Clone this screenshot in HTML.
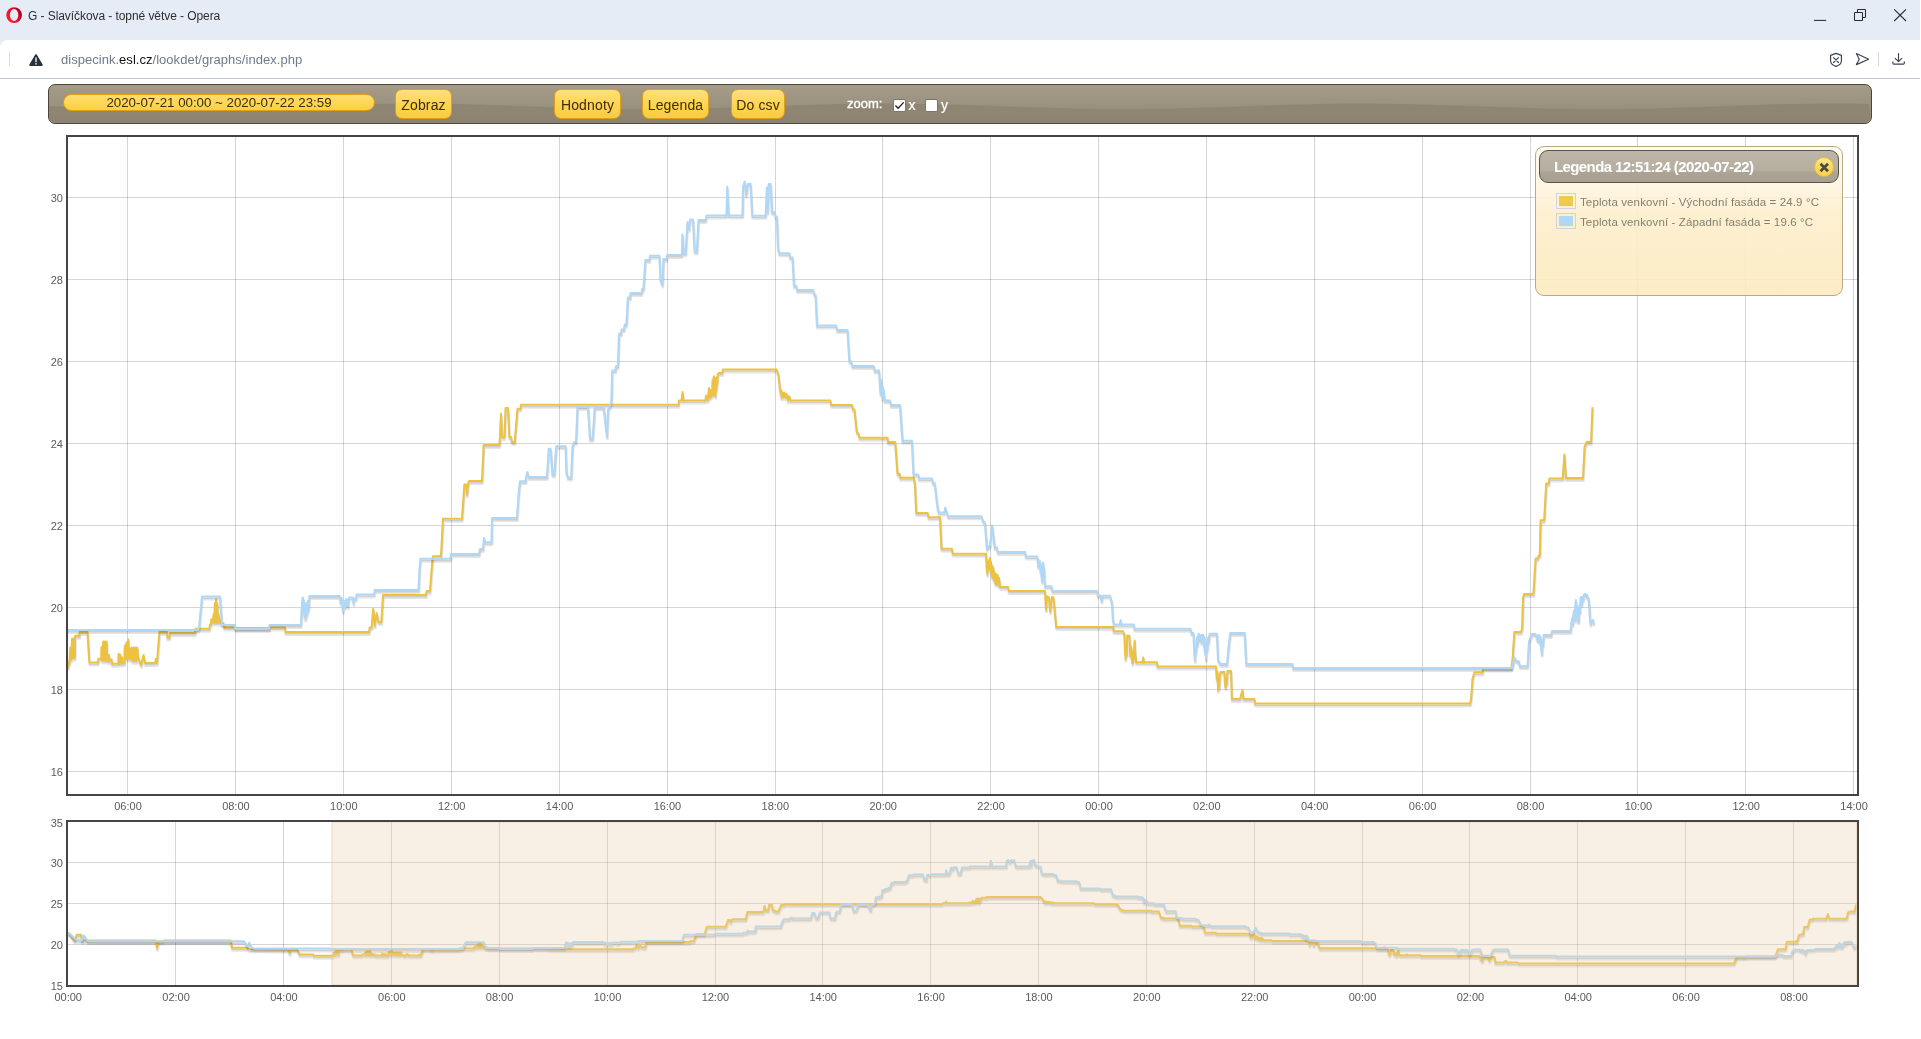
<!DOCTYPE html>
<html><head><meta charset="utf-8"><title>G - Slavíčkova - topné větve</title>
<style>
html,body{margin:0;padding:0;font-family:"Liberation Sans",sans-serif;}
body{width:1921px;height:1039px;overflow:hidden;position:relative;background:#fff;font-family:"Liberation Sans",sans-serif;}
.abs{position:absolute;}
#titlebar{left:0;top:0;width:1920px;height:50px;background:#e6ecf5;}
#title{left:28px;top:8px;font-size:12px;letter-spacing:-0.07px;color:#2e2e2e;white-space:nowrap;line-height:16px;}
#addr{left:0;top:40px;width:1920px;height:38px;background:#fff;border-top-left-radius:8px;border-bottom:1px solid #b9c6d8;}
#url{left:61px;top:52px;font-size:13px;letter-spacing:0.03px;line-height:16px;color:#6d7b8d;white-space:nowrap;}
#url b{font-weight:normal;color:#111;}
#tb{left:48px;top:84px;width:1822px;height:38px;border:1px solid #4b453b;border-radius:7px;
 background:linear-gradient(#a49b89 0%,#988f7d 65%,#968d7b 100%);overflow:hidden;}
#date{left:63px;top:94px;width:310px;height:15px;border:1px solid #e39f15;border-radius:9px;background:linear-gradient(#ffdd6d,#fdd043);
 font-size:13.300px;line-height:15px;color:#3a2c07;text-align:center;white-space:nowrap;}
.btn{top:89px;height:28px;border:1px solid #dba01c;border-radius:7px;background:linear-gradient(#ffe07a 0%,#fdd555 50%,#fccb3d 100%);
 font-size:14px;letter-spacing:0.150px;line-height:31px;color:#3d2d08;text-align:center;white-space:nowrap;}
.zl{color:#fff;white-space:nowrap;}
.cb{width:11px;height:11px;border:1px solid #767676;border-radius:2px;background:#fff;}
.tk{position:absolute;font-size:11px;line-height:13px;color:#5a5a5a;white-space:nowrap;}
#leg{left:1535px;top:146px;width:306px;height:148px;border:1px solid #b9aa83;border-radius:9px;background:linear-gradient(rgba(255,250,236,0.9) 0%,rgba(255,246,225,0.9) 25%,rgba(253,238,203,0.9) 46%,rgba(253,235,192,0.9) 100%);}
#legh{left:1539px;top:150px;width:298px;height:31px;border:1px solid #5a5347;border-radius:9px;background:linear-gradient(rgba(180,172,158,0.88) 0%,rgba(172,164,150,0.88) 62%,rgba(160,151,137,0.88) 70%,rgba(157,148,134,0.88) 100%);}
#legt{left:1554px;top:158px;font-size:15px;font-weight:bold;line-height:18px;color:#fff;white-space:nowrap;letter-spacing:-0.6px;}
#legx{left:1814px;top:157px;width:18px;height:18px;border:1px solid #e9b83a;border-radius:10px;background:linear-gradient(#ffe892 0%,#fdd85e 50%,#fdd24a 100%);}
.lb{width:14px;height:10px;border:1px solid #cfd3da;padding:2px;}
.lb i{display:block;width:14px;height:10px;}
.lt{font-size:11.500px;letter-spacing:0.120px;line-height:14px;color:#838071;white-space:nowrap;}
#root{position:absolute;left:0;top:0;width:1921px;height:1039px;will-change:transform;}
</style></head><body><div id="root">
<div id="titlebar" class="abs"></div>
<svg class="abs" style="left:5px;top:6px" width="18" height="18" viewBox="0 0 18 18"><defs><linearGradient id="og" x1="0.1" y1="0.8" x2="1" y2="0.3"><stop offset="0" stop-color="#ff1b2d"/><stop offset="0.45" stop-color="#f0102a"/><stop offset="1" stop-color="#a00019"/></linearGradient></defs><path fill-rule="evenodd" fill="url(#og)" d="M9.100 1.150a7.900 7.900 0 1 0 0 15.800a7.900 7.900 0 1 0 0-15.800ZM9.100 2.900a4.250 6.050 0 1 1 0 12.100a4.250 6.050 0 1 1 0-12.100Z"/></svg>
<div id="title" class="abs">G - Slavíčkova - topné větve - Opera</div>
<svg class="abs" style="left:1805px;top:5px" width="110" height="24" viewBox="0 0 110 24" fill="none" stroke="#2b2b2b" stroke-width="1.05">
 <path d="M8.900 15.400H21.200"/>
 <rect x="49.500" y="7.500" width="8" height="8" rx="0.600"/><path d="M52.500 7.300V5.100a0.600 0.600 0 0 1 0.600-0.600H59.900a0.600 0.600 0 0 1 0.600 0.600V11.900a0.600 0.600 0 0 1-0.600 0.600H57.700"/>
 <path d="M89.200 4.300L101 16M101 4.300L89.200 16" stroke-width="1.100"/>
</svg>
<div id="addr" class="abs"></div>
<div class="abs" style="left:9px;top:52px;width:1px;height:14px;background:#d9dde3"></div>
<svg class="abs" style="left:28px;top:52px" width="16" height="16" viewBox="0 0 16 16"><path d="M8 3.200L13.800 13H2.200Z" fill="#28313c" stroke="#28313c" stroke-width="2" stroke-linejoin="round"/><rect x="7.200" y="5.400" width="1.600" height="4.800" fill="#d8dadd"/><rect x="7.200" y="11.100" width="1.600" height="1.500" fill="#d8dadd"/></svg>
<div id="url" class="abs">dispecink.<b>esl.cz</b>/lookdet/graphs/index.php</div>
<svg class="abs" style="left:1824px;top:48px" width="90" height="24" viewBox="0 0 90 24" fill="none" stroke="#3b434d" stroke-width="1.150" stroke-linejoin="round" stroke-linecap="round">
 <path d="M12 5.400L17.400 7.400V13C17.400 15.600 14.800 17.400 12 18.400C9.200 17.400 6.600 15.600 6.600 13V7.400Z"/><path d="M9.500 9.700L14.500 14.500M14.500 9.700L9.500 14.500"/>
 <path d="M32.400 5.600L44.600 11.200L32.400 16.600L35.300 11.200Z"/>
 <path d="M54.500 4.500V17.800" stroke="#d3d7dd" stroke-width="1"/>
 <path d="M74.500 5.500V13.400M71.200 10.400L74.500 13.600L77.800 10.400M68.900 13.800V15.200Q68.900 16.100 69.800 16.100H79.400Q80.300 16.100 80.300 15.200V13.800"/>
</svg>

<div id="tb" class="abs"><svg width="1822" height="38" style="display:block"><defs><linearGradient id="wg" x1="0" y1="0" x2="0" y2="1"><stop offset="0.45" stop-color="#8e8573"/><stop offset="1" stop-color="#8a816e"/></linearGradient></defs><path d="M0,40L0,21.1 L10,21.5 L20,21.8 L30,22.2 L40,22.5 L50,22.8 L60,23.1 L70,23.3 L80,23.5 L90,23.7 L100,23.9 L110,24.0 L120,24.0 L130,24.0 L140,23.9 L150,23.8 L160,23.7 L170,23.5 L180,23.3 L190,23.0 L200,22.8 L210,22.4 L220,22.1 L230,21.8 L240,21.4 L250,21.1 L260,20.7 L270,20.4 L280,20.0 L290,19.7 L300,19.5 L310,19.2 L320,19.0 L330,18.8 L340,18.7 L350,18.6 L360,18.6 L370,18.6 L380,18.7 L390,18.8 L400,18.9 L410,19.1 L420,19.4 L430,19.6 L440,19.9 L450,20.2 L460,20.6 L470,20.9 L480,21.3 L490,21.6 L500,22.0 L510,22.3 L520,22.6 L530,22.9 L540,23.2 L550,23.4 L560,23.6 L570,23.8 L580,23.9 L590,24.0 L600,24.0 L610,24.0 L620,23.9 L630,23.8 L640,23.6 L650,23.4 L660,23.2 L670,22.9 L680,22.6 L690,22.3 L700,21.9 L710,21.6 L720,21.2 L730,20.9 L740,20.5 L750,20.2 L760,19.9 L770,19.6 L780,19.3 L790,19.1 L800,18.9 L810,18.8 L820,18.7 L830,18.6 L840,18.6 L850,18.6 L860,18.7 L870,18.9 L880,19.0 L890,19.2 L900,19.5 L910,19.8 L920,20.1 L930,20.4 L940,20.7 L950,21.1 L960,21.5 L970,21.8 L980,22.2 L990,22.5 L1000,22.8 L1010,23.1 L1020,23.3 L1030,23.5 L1040,23.7 L1050,23.9 L1060,24.0 L1070,24.0 L1080,24.0 L1090,23.9 L1100,23.8 L1110,23.7 L1120,23.5 L1130,23.3 L1140,23.0 L1150,22.8 L1160,22.4 L1170,22.1 L1180,21.8 L1190,21.4 L1200,21.1 L1210,20.7 L1220,20.4 L1230,20.0 L1240,19.7 L1250,19.5 L1260,19.2 L1270,19.0 L1280,18.8 L1290,18.7 L1300,18.6 L1310,18.6 L1320,18.6 L1330,18.7 L1340,18.8 L1350,18.9 L1360,19.1 L1370,19.4 L1380,19.6 L1390,19.9 L1400,20.2 L1410,20.6 L1420,20.9 L1430,21.3 L1440,21.6 L1450,22.0 L1460,22.3 L1470,22.6 L1480,22.9 L1490,23.2 L1500,23.4 L1510,23.6 L1520,23.8 L1530,23.9 L1540,24.0 L1550,24.0 L1560,24.0 L1570,23.9 L1580,23.8 L1590,23.6 L1600,23.4 L1610,23.2 L1620,22.9 L1630,22.6 L1640,22.3 L1650,21.9 L1660,21.6 L1670,21.2 L1680,20.9 L1690,20.5 L1700,20.2 L1710,19.9 L1720,19.6 L1730,19.3 L1740,19.1 L1750,18.9 L1760,18.8 L1770,18.7 L1780,18.6 L1790,18.6 L1800,18.6 L1810,18.7 L1820,18.9 L1822,40Z" fill="url(#wg)"/></svg></div>
<div id="date" class="abs">2020-07-21 00:00 ~ 2020-07-22 23:59</div>
<div class="btn abs" style="left:395px;width:55px">Zobraz</div>
<div class="btn abs" style="left:554px;width:65px">Hodnoty</div>
<div class="btn abs" style="left:642px;width:65px">Legenda</div>
<div class="btn abs" style="left:731px;width:52px">Do csv</div>
<div class="zl abs" style="left:847px;top:96px;font-size:13px;line-height:16px;-webkit-text-stroke:0.350px #fff">zoom:</div>
<div class="cb abs" style="left:893px;top:99px"></div>
<svg class="abs" style="left:893px;top:99px" width="13" height="13" viewBox="0 0 13 13"><path d="M2.400 6.500L5.100 9.200L10.700 3.400" fill="none" stroke="#222" stroke-width="1.350"/></svg>
<div class="zl abs" style="left:908.500px;top:97px;font-size:14px;line-height:16px;-webkit-text-stroke:0.200px #fff">x</div>
<div class="cb abs" style="left:925px;top:99px"></div>
<div class="zl abs" style="left:941px;top:97px;font-size:14px;line-height:16px;-webkit-text-stroke:0.200px #fff">y</div>

<svg width="1921" height="1039" style="position:absolute;left:0;top:0" shape-rendering="auto">
<g shape-rendering="crispEdges" stroke="rgba(0,0,0,0.165)" stroke-width="1">
<line x1="127.5" y1="137" x2="127.5" y2="794"/>
<line x1="235.5" y1="137" x2="235.5" y2="794"/>
<line x1="343.5" y1="137" x2="343.5" y2="794"/>
<line x1="451.5" y1="137" x2="451.5" y2="794"/>
<line x1="559.5" y1="137" x2="559.5" y2="794"/>
<line x1="667.5" y1="137" x2="667.5" y2="794"/>
<line x1="775.5" y1="137" x2="775.5" y2="794"/>
<line x1="882.5" y1="137" x2="882.5" y2="794"/>
<line x1="990.5" y1="137" x2="990.5" y2="794"/>
<line x1="1098.5" y1="137" x2="1098.5" y2="794"/>
<line x1="1206.5" y1="137" x2="1206.5" y2="794"/>
<line x1="1314.5" y1="137" x2="1314.5" y2="794"/>
<line x1="1422.5" y1="137" x2="1422.5" y2="794"/>
<line x1="1530.5" y1="137" x2="1530.5" y2="794"/>
<line x1="1637.5" y1="137" x2="1637.5" y2="794"/>
<line x1="1745.5" y1="137" x2="1745.5" y2="794"/>
<line x1="1853.5" y1="137" x2="1853.5" y2="794"/>
<line x1="68" y1="771.5" x2="1857" y2="771.5"/>
<line x1="68" y1="689.5" x2="1857" y2="689.5"/>
<line x1="68" y1="607.5" x2="1857" y2="607.5"/>
<line x1="68" y1="525.5" x2="1857" y2="525.5"/>
<line x1="68" y1="443.5" x2="1857" y2="443.5"/>
<line x1="68" y1="361.5" x2="1857" y2="361.5"/>
<line x1="68" y1="279.5" x2="1857" y2="279.5"/>
<line x1="68" y1="197.5" x2="1857" y2="197.5"/>
</g>
<clipPath id="cm"><rect x="68" y="137" width="1789" height="657"/></clipPath>
<g clip-path="url(#cm)">
<polyline points="-195.4,551.5 -193.4,557.5 -188.8,590.2 -186.6,561.1 -182.3,561.1 -181.5,590.2 -107.3,590.7 -106.3,627.0 -104.8,595.3 -100.3,595.3 -99.3,590.7 -32.7,590.7 -31.3,627.0 -16.7,627.0 -13.8,634.3 24.8,635.0 26.3,652.6 27.7,636.0 33.7,636.0 36.5,660.2 49.7,660.2 50.5,667.2 67.7,667.2 68.5,669.4 68.9,664.3 69.8,666.2 70.7,649.9 71.6,661.9 72.5,641.0 73.4,660.7 74.3,641.0 75.2,660.2 75.5,638.5 76.4,638.0 79.8,638.5 80.0,634.5 87.9,634.5 89.8,665.0 98.4,665.0 98.8,661.2 101.6,661.2 101.9,649.4 102.8,663.1 103.6,644.0 104.5,663.1 105.3,644.0 106.2,663.1 107.0,644.0 107.4,657.2 108.3,663.7 109.2,657.2 110.1,663.7 110.4,661.9 112.1,661.9 112.3,666.2 118.7,666.2 119.0,656.2 119.9,666.2 120.8,657.2 121.7,666.2 122.6,659.9 122.9,665.5 124.8,665.5 125.2,648.1 126.1,661.2 126.9,644.9 127.8,661.2 128.6,641.6 129.5,661.2 130.3,651.0 131.0,661.2 132.0,650.0 133.0,663.5 133.9,650.0 134.9,663.5 135.8,650.0 136.8,663.5 137.7,650.0 138.4,660.0 141.6,667.5 143.9,657.5 145.4,665.5 155.4,665.5 156.4,661.2 157.4,665.5 159.8,634.5 167.4,634.5 167.9,640.0 169.8,640.0 170.4,635.5 195.4,635.5 195.9,631.2 209.8,631.2 210.4,626.9 211.4,626.9 211.7,621.8 212.3,625.0 212.9,621.8 213.5,625.0 214.1,616.0 214.7,625.0 215.3,605.5 215.9,625.0 216.5,602.0 217.1,625.0 217.7,605.9 218.3,625.0 218.9,616.5 219.5,625.0 220.1,621.8 220.9,625.0 224.1,626.2 224.8,630.0 234.8,630.0 235.4,630.5 270.4,630.5 270.9,630.0 285.4,630.0 285.9,634.5 369.4,634.5 370.1,630.0 372.0,630.0 373.6,611.2 375.1,628.1 377.0,615.5 378.9,624.5 381.8,624.5 383.4,597.5 426.4,597.5 427.1,593.5 430.4,593.5 432.8,562.5 433.4,558.7 441.4,558.7 443.4,521.2 462.4,521.2 463.4,507.5 464.8,486.9 466.4,486.9 467.4,496.9 468.4,486.9 469.4,483.5 482.4,483.5 484.1,447.5 499.8,447.5 500.4,439.5 501.4,416.2 502.4,439.5 504.8,439.5 506.0,410.5 508.4,410.5 509.8,439.5 511.4,439.5 512.4,444.5 515.1,444.5 517.9,411.2 521.0,411.2 521.4,407.2 678.9,407.2 679.4,403.1 682.0,403.1 682.9,394.5 683.9,403.1 705.8,403.1 706.4,398.1 707.4,401.5 708.4,402.5 709.0,394.5 709.4,390.5 710.0,399.5 710.8,400.0 711.4,392.5 712.0,398.5 712.6,394.5 713.0,382.5 713.5,397.5 714.0,379.5 714.4,378.7 714.9,396.5 715.4,382.5 715.8,398.5 716.3,380.5 716.7,392.5 717.0,380.0 717.6,386.5 718.2,376.5 718.9,375.5 722.6,375.5 723.4,371.9 777.0,371.9 778.9,377.5 779.8,386.5 780.8,395.0 781.4,392.5 782.0,400.0 782.6,394.5 783.4,395.5 784.0,399.5 784.6,395.0 785.1,395.5 785.8,399.5 786.4,399.5 787.0,396.5 787.6,399.5 788.4,403.1 789.0,398.5 789.6,401.5 790.1,399.5 790.8,403.1 830.8,403.1 831.6,407.5 852.3,407.5 853.4,411.9 854.8,411.9 857.3,435.0 859.1,436.2 859.8,440.2 887.9,440.2 888.5,444.5 895.6,444.5 897.9,476.2 900.1,476.2 900.6,480.2 914.1,480.2 915.4,486.5 916.6,515.6 928.1,515.6 928.9,519.7 940.4,519.7 941.9,551.2 952.3,551.2 953.1,556.2 986.4,556.2 987.0,568.5 987.6,576.2 988.2,564.5 988.8,572.5 989.4,562.5 989.9,568.5 990.4,560.6 990.9,572.5 991.4,564.5 991.9,577.5 992.3,578.7 992.8,568.5 993.3,580.5 993.8,570.5 994.3,582.5 994.8,574.5 995.4,584.5 996.0,586.2 996.6,576.5 997.2,586.5 998.1,577.5 998.7,587.5 999.4,580.5 1000.4,589.4 1008.5,589.4 1009.1,593.5 1045.4,593.5 1046.4,611.9 1047.3,598.7 1049.4,600.0 1050.6,613.7 1052.3,599.4 1053.9,600.0 1056.6,629.4 1113.5,629.4 1114.1,633.7 1123.5,633.7 1124.8,637.5 1125.4,652.5 1126.0,661.2 1126.6,647.5 1127.1,657.5 1127.6,638.1 1128.4,638.5 1129.8,638.1 1130.3,650.5 1130.8,658.7 1131.3,648.5 1131.9,652.5 1132.4,660.5 1132.9,665.6 1133.4,654.5 1134.0,662.5 1134.6,650.5 1135.1,643.1 1135.7,657.5 1136.6,664.8 1142.9,664.8 1143.7,660.0 1144.4,664.8 1157.3,664.8 1157.9,669.0 1216.4,669.0 1217.0,678.5 1217.4,682.5 1217.9,674.5 1218.5,692.5 1219.0,680.5 1219.5,690.5 1220.1,678.5 1221.0,674.4 1224.8,674.4 1225.3,684.5 1226.0,690.0 1226.6,680.5 1227.2,686.5 1227.9,673.5 1231.4,673.5 1232.3,701.6 1240.4,701.6 1241.4,697.5 1242.9,692.5 1243.9,701.6 1254.8,701.6 1255.4,706.0 1470.6,706.0 1471.6,700.0 1472.9,681.2 1474.8,675.0 1482.9,675.0 1483.5,671.0 1511.6,671.0 1512.9,662.5 1514.8,634.4 1521.6,634.4 1522.6,630.0 1523.5,600.0 1524.4,596.5 1533.9,596.5 1536.0,561.1 1538.0,561.1 1539.0,558.1 1540.2,558.1 1541.0,522.7 1544.6,522.7 1546.6,486.0 1549.1,486.0 1549.7,481.0 1563.2,481.0 1564.8,457.1 1566.3,480.5 1583.4,480.5 1585.0,449.0 1587.1,444.4 1591.5,444.4 1592.9,409.6" fill="none" stroke="rgba(0,0,0,0.1)" stroke-width="3.00" stroke-linejoin="round"/>
<polyline points="-195.5,550.8 -193.5,556.8 -188.9,589.5 -186.7,560.3 -182.4,560.3 -181.6,589.5 -107.5,590.0 -106.5,626.2 -105.0,594.5 -100.5,594.5 -99.5,590.0 -32.9,590.0 -31.5,626.2 -16.9,626.2 -14.0,633.5 24.6,634.3 26.1,651.9 27.5,635.3 33.5,635.3 36.3,659.4 49.5,659.4 50.3,666.5 67.6,666.5 68.4,668.6 68.8,663.5 69.7,665.5 70.6,649.1 71.5,661.2 72.4,640.2 73.3,660.0 74.2,640.2 75.1,659.4 75.4,637.7 76.3,637.2 79.7,637.7 79.9,633.7 87.8,633.7 89.7,664.2 98.3,664.2 98.7,660.4 101.5,660.4 101.8,648.6 102.7,662.3 103.5,643.2 104.4,662.3 105.2,643.2 106.1,662.3 106.9,643.2 107.3,656.4 108.2,662.9 109.1,656.4 110.0,662.9 110.3,661.1 112.0,661.1 112.2,665.4 118.6,665.4 118.9,655.4 119.8,665.4 120.7,656.5 121.6,665.4 122.5,659.2 122.8,664.7 124.7,664.7 125.1,647.3 126.0,660.4 126.8,644.1 127.7,660.4 128.5,640.9 129.4,660.4 130.2,650.2 130.9,660.4 131.9,649.2 132.9,662.7 133.8,649.2 134.8,662.7 135.7,649.2 136.7,662.7 137.6,649.2 138.3,659.2 141.5,666.7 143.8,656.7 145.3,664.7 155.3,664.7 156.3,660.4 157.3,664.7 159.7,633.7 167.3,633.7 167.8,639.2 169.7,639.2 170.3,634.7 195.3,634.7 195.8,630.4 209.7,630.4 210.3,626.1 211.3,626.1 211.6,621.0 212.2,624.2 212.8,621.0 213.4,624.2 214.0,615.2 214.6,624.2 215.2,604.7 215.8,624.2 216.4,601.2 217.0,624.2 217.6,605.1 218.2,624.2 218.8,615.7 219.4,624.2 220.0,621.0 220.8,624.2 224.0,625.4 224.7,629.2 234.7,629.2 235.3,629.7 270.3,629.7 270.8,629.2 285.3,629.2 285.8,633.7 369.3,633.7 370.0,629.2 371.9,629.2 373.5,610.4 375.0,627.3 376.9,614.7 378.8,623.7 381.7,623.7 383.3,596.7 426.3,596.7 427.0,592.7 430.3,592.7 432.7,561.7 433.3,557.9 441.3,557.9 443.3,520.4 462.3,520.4 463.3,506.7 464.7,486.1 466.3,486.1 467.3,496.1 468.3,486.1 469.3,482.7 482.3,482.7 484.0,446.7 499.7,446.7 500.3,438.7 501.3,415.4 502.3,438.7 504.7,438.7 505.9,409.7 508.3,409.7 509.7,438.7 511.3,438.7 512.3,443.7 515.0,443.7 517.8,410.4 520.9,410.4 521.3,406.4 678.8,406.4 679.3,402.3 681.9,402.3 682.8,393.7 683.8,402.3 705.7,402.3 706.3,397.3 707.3,400.7 708.3,401.7 708.9,393.7 709.3,389.7 709.9,398.7 710.7,399.2 711.3,391.7 711.9,397.7 712.5,393.7 712.9,381.7 713.4,396.7 713.9,378.7 714.3,377.9 714.8,395.7 715.3,381.7 715.7,397.7 716.2,379.7 716.6,391.7 716.9,379.2 717.5,385.7 718.1,375.7 718.8,374.7 722.5,374.7 723.3,371.1 776.9,371.1 778.8,376.7 779.7,385.7 780.7,394.2 781.3,391.7 781.9,399.2 782.5,393.7 783.3,394.7 783.9,398.7 784.5,394.2 785.0,394.7 785.7,398.7 786.3,398.7 786.9,395.7 787.5,398.7 788.3,402.3 788.9,397.7 789.5,400.7 790.0,398.7 790.7,402.3 830.7,402.3 831.5,406.7 852.2,406.7 853.3,411.1 854.7,411.1 857.2,434.2 859.0,435.4 859.7,439.4 887.8,439.4 888.4,443.7 895.5,443.7 897.8,475.4 900.0,475.4 900.5,479.4 914.0,479.4 915.3,485.7 916.5,514.8 928.0,514.8 928.8,518.9 940.3,518.9 941.8,550.4 952.2,550.4 953.0,555.4 986.3,555.4 986.9,567.7 987.5,575.4 988.1,563.7 988.7,571.7 989.3,561.7 989.8,567.7 990.3,559.8 990.8,571.7 991.3,563.7 991.8,576.7 992.2,577.9 992.7,567.7 993.2,579.7 993.7,569.7 994.2,581.7 994.7,573.7 995.3,583.7 995.9,585.4 996.5,575.7 997.1,585.7 998.0,576.7 998.6,586.7 999.3,579.7 1000.3,588.6 1008.4,588.6 1009.0,592.7 1045.3,592.7 1046.3,611.1 1047.2,597.9 1049.3,599.2 1050.5,612.9 1052.2,598.6 1053.8,599.2 1056.5,628.6 1113.4,628.6 1114.0,632.9 1123.4,632.9 1124.7,636.7 1125.3,651.7 1125.9,660.4 1126.5,646.7 1127.0,656.7 1127.5,637.3 1128.3,637.7 1129.7,637.3 1130.2,649.7 1130.7,657.9 1131.2,647.7 1131.8,651.7 1132.3,659.7 1132.8,664.8 1133.3,653.7 1133.9,661.7 1134.5,649.7 1135.0,642.3 1135.6,656.7 1136.5,664.0 1142.8,664.0 1143.6,659.2 1144.3,664.0 1157.2,664.0 1157.8,668.2 1216.3,668.2 1216.9,677.7 1217.3,681.7 1217.8,673.7 1218.4,691.7 1218.9,679.7 1219.4,689.7 1220.0,677.7 1220.9,673.6 1224.7,673.6 1225.2,683.7 1225.9,689.2 1226.5,679.7 1227.1,685.7 1227.8,672.7 1231.3,672.7 1232.2,700.8 1240.3,700.8 1241.3,696.7 1242.8,691.7 1243.8,700.8 1254.7,700.8 1255.3,705.2 1470.5,705.2 1471.5,699.2 1472.8,680.4 1474.7,674.2 1482.8,674.2 1483.4,670.2 1511.5,670.2 1512.8,661.7 1514.7,633.6 1521.5,633.6 1522.5,629.2 1523.4,599.2 1524.3,595.7 1533.8,595.7 1535.9,560.3 1537.9,560.3 1538.9,557.3 1540.1,557.3 1540.9,521.9 1544.5,521.9 1546.5,485.2 1549.0,485.2 1549.6,480.2 1563.1,480.2 1564.7,456.3 1566.2,479.7 1583.3,479.7 1584.9,448.2 1587.0,443.6 1591.4,443.6 1592.8,408.8" fill="none" stroke="rgba(0,0,0,0.1)" stroke-width="1.50" stroke-linejoin="round"/>
<polyline points="-195.8,549.0 -193.8,555.1 -189.2,587.8 -187.0,558.6 -182.7,558.6 -181.9,587.8 -107.8,588.3 -106.8,624.5 -105.3,592.8 -100.8,592.8 -99.8,588.3 -33.2,588.3 -31.8,624.5 -17.2,624.5 -14.3,631.8 24.3,632.6 25.8,650.2 27.2,633.6 33.2,633.6 36.0,657.7 49.2,657.7 50.0,664.7 67.2,664.7 68.1,666.9 68.5,661.8 69.4,663.8 70.3,647.4 71.2,659.5 72.1,638.5 73.0,658.2 73.9,638.5 74.8,657.7 75.1,636.0 76.0,635.5 79.4,636.0 79.6,632.0 87.5,632.0 89.4,662.5 98.0,662.5 98.4,658.7 101.2,658.7 101.5,646.9 102.3,660.6 103.2,641.5 104.0,660.6 104.9,641.5 105.8,660.6 106.6,641.5 107.0,654.7 107.9,661.2 108.8,654.7 109.7,661.2 110.0,659.4 111.7,659.4 111.9,663.7 118.3,663.7 118.6,653.7 119.5,663.7 120.4,654.8 121.3,663.7 122.2,657.5 122.5,663.0 124.4,663.0 124.8,645.6 125.7,658.7 126.5,642.4 127.3,658.7 128.2,639.2 129.0,658.7 129.9,648.5 130.6,658.7 131.6,647.5 132.5,661.0 133.5,647.5 134.4,661.0 135.4,647.5 136.3,661.0 137.3,647.5 138.0,657.5 141.2,665.0 143.5,655.0 145.0,663.0 155.0,663.0 156.0,658.7 157.0,663.0 159.4,632.0 167.0,632.0 167.5,637.5 169.4,637.5 170.0,633.0 195.0,633.0 195.5,628.7 209.4,628.7 210.0,624.4 211.0,624.4 211.3,619.3 211.9,622.5 212.5,619.3 213.1,622.5 213.7,613.5 214.3,622.5 214.9,603.0 215.5,622.5 216.1,599.5 216.7,622.5 217.3,603.4 217.9,622.5 218.5,614.0 219.1,622.5 219.7,619.3 220.5,622.5 223.7,623.7 224.4,627.5 234.4,627.5 235.0,628.0 270.0,628.0 270.5,627.5 285.0,627.5 285.5,632.0 369.0,632.0 369.7,627.5 371.6,627.5 373.2,608.7 374.7,625.6 376.6,613.0 378.5,622.0 381.4,622.0 383.0,595.0 426.0,595.0 426.7,591.0 430.0,591.0 432.4,560.0 433.0,556.2 441.0,556.2 443.0,518.7 462.0,518.7 463.0,505.0 464.4,484.4 466.0,484.4 467.0,494.4 468.0,484.4 469.0,481.0 482.0,481.0 483.7,445.0 499.4,445.0 500.0,437.0 501.0,413.7 502.0,437.0 504.4,437.0 505.6,408.0 508.0,408.0 509.4,437.0 511.0,437.0 512.0,442.0 514.7,442.0 517.5,408.7 520.6,408.7 521.0,404.7 678.5,404.7 679.0,400.6 681.6,400.6 682.5,392.0 683.5,400.6 705.4,400.6 706.0,395.6 707.0,399.0 708.0,400.0 708.6,392.0 709.0,388.0 709.6,397.0 710.4,397.5 711.0,390.0 711.6,396.0 712.2,392.0 712.6,380.0 713.1,395.0 713.6,377.0 714.0,376.2 714.5,394.0 715.0,380.0 715.4,396.0 715.9,378.0 716.3,390.0 716.6,377.5 717.2,384.0 717.8,374.0 718.5,373.0 722.2,373.0 723.0,369.4 776.6,369.4 778.5,375.0 779.4,384.0 780.4,392.5 781.0,390.0 781.6,397.5 782.2,392.0 783.0,393.0 783.6,397.0 784.2,392.5 784.7,393.0 785.4,397.0 786.0,397.0 786.6,394.0 787.2,397.0 788.0,400.6 788.6,396.0 789.2,399.0 789.7,397.0 790.4,400.6 830.4,400.6 831.2,405.0 851.9,405.0 853.0,409.4 854.4,409.4 856.9,432.5 858.7,433.7 859.4,437.7 887.5,437.7 888.1,442.0 895.2,442.0 897.5,473.7 899.7,473.7 900.2,477.7 913.7,477.7 915.0,484.0 916.2,513.1 927.7,513.1 928.5,517.2 940.0,517.2 941.5,548.7 951.9,548.7 952.7,553.7 986.0,553.7 986.6,566.0 987.2,573.7 987.8,562.0 988.4,570.0 989.0,560.0 989.5,566.0 990.0,558.1 990.5,570.0 991.0,562.0 991.5,575.0 991.9,576.2 992.4,566.0 992.9,578.0 993.4,568.0 993.9,580.0 994.4,572.0 995.0,582.0 995.6,583.7 996.2,574.0 996.8,584.0 997.7,575.0 998.3,585.0 999.0,578.0 1000.0,586.9 1008.1,586.9 1008.7,591.0 1045.0,591.0 1046.0,609.4 1046.9,596.2 1049.0,597.5 1050.2,611.2 1051.9,596.9 1053.5,597.5 1056.2,626.9 1113.1,626.9 1113.7,631.2 1123.1,631.2 1124.4,635.0 1125.0,650.0 1125.6,658.7 1126.2,645.0 1126.7,655.0 1127.2,635.6 1128.0,636.0 1129.4,635.6 1129.9,648.0 1130.4,656.2 1130.9,646.0 1131.5,650.0 1132.0,658.0 1132.5,663.1 1133.0,652.0 1133.6,660.0 1134.2,648.0 1134.7,640.6 1135.3,655.0 1136.2,662.3 1142.5,662.3 1143.3,657.5 1144.0,662.3 1156.9,662.3 1157.5,666.5 1216.0,666.5 1216.6,676.0 1217.0,680.0 1217.5,672.0 1218.1,690.0 1218.6,678.0 1219.1,688.0 1219.7,676.0 1220.6,671.9 1224.4,671.9 1224.9,682.0 1225.6,687.5 1226.2,678.0 1226.8,684.0 1227.5,671.0 1231.0,671.0 1231.9,699.1 1240.0,699.1 1241.0,695.0 1242.5,690.0 1243.5,699.1 1254.4,699.1 1255.0,703.5 1470.2,703.5 1471.2,697.5 1472.5,678.7 1474.4,672.5 1482.5,672.5 1483.1,668.5 1511.2,668.5 1512.5,660.0 1514.4,631.9 1521.2,631.9 1522.2,627.5 1523.1,597.5 1524.0,594.0 1533.5,594.0 1535.6,558.6 1537.6,558.6 1538.6,555.6 1539.8,555.6 1540.6,520.2 1544.2,520.2 1546.2,483.5 1548.7,483.5 1549.3,478.5 1562.8,478.5 1564.4,454.6 1565.9,478.0 1583.0,478.0 1584.6,446.5 1586.7,441.9 1591.1,441.9 1592.5,407.1" fill="none" stroke="#edc240" stroke-width="2.00" stroke-linejoin="round"/>
<polyline points="-195.4,553.5 -193.4,557.5 -187.4,586.7 -181.4,590.2 -179.8,564.6 -178.4,572.6 -175.7,592.8 -163.4,593.8 -19.6,593.8 -18.3,600.3 -16.0,619.4 -14.1,601.3 -11.6,627.0 -9.3,630.0 67.7,631.0 68.4,632.5 198.4,632.5 199.4,630.5 202.4,599.0 220.4,599.0 222.4,627.5 235.4,627.5 235.9,631.5 269.4,631.5 269.9,627.5 300.4,627.5 301.4,627.5 302.0,614.5 302.7,602.5 303.4,600.0 303.8,614.5 304.3,603.5 304.8,618.5 305.3,605.5 305.8,621.2 306.3,606.5 306.8,618.5 307.3,605.5 307.8,615.5 308.3,603.5 308.8,612.5 309.9,598.5 340.1,598.5 340.9,604.5 341.4,605.5 341.9,600.5 342.4,602.5 343.0,610.5 343.6,613.5 344.2,604.5 344.9,603.5 345.4,609.5 345.9,608.5 346.4,602.5 346.9,601.5 347.6,607.5 348.4,608.5 348.9,602.5 349.4,600.0 353.4,600.0 353.9,605.5 354.4,601.2 356.4,601.2 357.0,596.9 374.4,596.9 375.1,592.5 418.9,592.5 419.9,572.5 420.8,561.2 450.8,561.2 451.4,556.5 479.4,556.5 480.4,551.5 483.4,551.5 484.4,540.5 485.8,544.7 492.0,544.7 492.4,520.5 517.4,520.5 518.9,497.5 520.4,483.7 526.0,483.7 526.4,479.5 527.9,474.5 529.1,479.5 547.4,479.5 549.1,451.2 551.0,451.2 552.9,476.9 554.8,476.9 556.6,448.7 566.0,448.7 566.9,475.0 568.4,480.0 571.6,480.0 572.9,448.7 574.8,444.5 576.4,444.5 577.9,409.5 588.4,409.5 590.4,441.2 593.1,441.2 595.1,410.0 604.1,410.0 607.4,438.7 608.4,412.5 611.0,406.9 611.9,402.5 612.6,373.1 615.8,373.1 616.4,368.7 618.3,368.7 619.4,336.2 621.4,336.2 622.0,331.9 624.4,331.9 625.1,326.9 626.8,326.9 628.3,300.0 630.4,300.0 631.0,295.5 642.0,295.5 642.7,291.3 643.9,291.3 644.4,282.5 645.8,262.5 649.8,262.5 650.4,258.2 659.8,258.2 661.0,283.2 662.9,287.0 663.9,261.4 666.9,261.4 667.6,257.5 682.3,257.5 682.9,237.0 683.9,255.7 686.0,255.7 686.6,245.7 687.9,224.5 689.4,231.5 690.4,222.0 693.4,222.0 695.1,253.9 697.3,253.9 698.9,222.5 706.0,222.5 706.9,218.0 726.9,218.0 727.6,189.2 729.1,218.0 742.9,218.0 743.4,189.5 745.0,183.9 746.6,197.0 748.1,186.4 751.0,186.4 752.6,218.2 766.0,218.2 767.3,190.1 768.1,214.5 769.1,186.4 771.0,186.4 772.3,214.5 774.8,214.5 776.0,218.9 777.3,218.9 778.4,250.7 779.8,255.7 789.8,255.7 790.6,260.1 792.9,260.1 794.4,288.2 796.6,288.2 797.6,292.5 813.4,292.5 815.4,297.5 816.0,297.5 817.4,328.1 836.6,328.1 837.6,332.5 847.9,332.5 849.8,363.7 851.6,363.7 852.6,368.5 874.1,368.5 875.1,373.1 879.4,373.1 881.0,396.2 881.6,382.5 882.9,401.2 883.5,390.0 885.1,403.1 890.4,403.1 891.4,407.5 900.4,407.5 902.9,443.3 912.3,443.3 913.9,476.9 918.5,476.9 919.4,481.0 932.3,481.0 933.5,485.6 935.1,485.6 938.1,510.6 939.1,515.0 944.8,515.0 945.6,510.0 947.3,515.0 948.5,518.7 981.9,518.7 983.5,523.7 985.4,525.0 987.3,551.2 988.9,549.5 990.4,547.5 992.6,528.1 995.1,550.0 997.3,550.0 998.1,554.4 1025.4,554.4 1026.3,559.0 1037.6,559.0 1038.0,562.5 1038.5,568.7 1039.0,562.5 1039.6,566.5 1040.4,563.7 1041.0,574.5 1041.6,567.5 1042.1,580.5 1042.6,583.7 1043.1,570.5 1043.5,565.0 1044.0,578.5 1044.5,570.5 1045.0,584.5 1045.4,588.7 1051.9,588.7 1052.6,593.4 1097.3,593.4 1098.5,598.1 1101.0,598.1 1101.9,603.1 1103.1,598.3 1110.4,598.3 1112.3,605.0 1113.5,623.7 1114.8,626.9 1120.2,626.9 1121.0,622.5 1121.8,626.9 1134.1,626.9 1135.0,631.3 1191.0,631.3 1191.9,635.6 1193.9,635.6 1194.4,647.5 1194.9,657.5 1195.4,662.5 1195.9,650.5 1196.4,654.5 1197.3,640.0 1197.8,647.5 1198.3,638.5 1199.1,636.2 1199.7,642.5 1200.4,637.5 1201.0,638.7 1201.6,644.5 1202.2,637.5 1202.8,643.5 1203.5,636.9 1204.1,647.5 1204.7,639.5 1205.3,654.5 1205.8,644.5 1206.4,661.2 1207.0,647.5 1207.6,652.5 1208.5,640.0 1209.1,644.5 1209.7,637.5 1210.4,636.2 1217.3,636.2 1218.5,662.5 1221.0,666.5 1227.3,666.5 1227.9,661.2 1228.9,650.0 1230.6,635.6 1245.1,635.6 1246.6,666.5 1292.9,666.5 1293.5,670.6 1512.3,670.6 1514.8,660.0 1517.3,663.7 1519.1,663.7 1520.4,668.7 1527.9,668.7 1529.4,643.7 1532.3,636.5 1536.0,636.5 1536.9,639.5 1537.9,642.5 1538.6,637.5 1539.2,643.5 1539.8,637.5 1540.4,645.5 1541.0,639.5 1541.6,650.5 1542.3,656.2 1542.9,644.5 1543.4,647.5 1544.1,637.5 1551.6,637.5 1552.3,633.5 1571.0,633.5 1571.9,624.5 1572.9,620.0 1573.4,626.5 1574.0,614.5 1574.8,612.5 1575.3,622.5 1575.8,606.5 1576.3,602.5 1576.8,620.5 1577.4,608.5 1578.0,623.5 1578.6,610.5 1579.1,623.7 1579.7,608.5 1580.4,614.5 1581.0,600.5 1581.6,599.4 1582.2,606.5 1582.8,599.5 1583.4,602.5 1584.2,597.5 1585.4,596.2 1586.4,598.5 1587.4,597.0 1588.4,600.5 1589.1,601.2 1589.8,610.5 1590.4,620.5 1591.0,626.2 1592.2,623.5 1593.5,622.5 1594.1,626.2" fill="none" stroke="rgba(0,0,0,0.1)" stroke-width="3.00" stroke-linejoin="round"/>
<polyline points="-195.5,552.8 -193.5,556.8 -187.5,586.0 -181.5,589.5 -179.9,563.8 -178.5,571.9 -175.8,592.0 -163.5,593.0 -19.8,593.0 -18.5,599.6 -16.2,618.7 -14.3,600.6 -11.8,626.2 -9.5,629.2 67.6,630.3 68.3,631.7 198.3,631.7 199.3,629.7 202.3,598.2 220.3,598.2 222.3,626.7 235.3,626.7 235.8,630.7 269.3,630.7 269.8,626.7 300.3,626.7 301.3,626.7 301.9,613.7 302.6,601.7 303.3,599.2 303.7,613.7 304.2,602.7 304.7,617.7 305.2,604.7 305.7,620.4 306.2,605.7 306.7,617.7 307.2,604.7 307.7,614.7 308.2,602.7 308.7,611.7 309.8,597.7 340.0,597.7 340.8,603.7 341.3,604.7 341.8,599.7 342.3,601.7 342.9,609.7 343.5,612.7 344.1,603.7 344.8,602.7 345.3,608.7 345.8,607.7 346.3,601.7 346.8,600.7 347.5,606.7 348.3,607.7 348.8,601.7 349.3,599.2 353.3,599.2 353.8,604.7 354.3,600.4 356.3,600.4 356.9,596.1 374.3,596.1 375.0,591.7 418.8,591.7 419.8,571.7 420.7,560.4 450.7,560.4 451.3,555.7 479.3,555.7 480.3,550.7 483.3,550.7 484.3,539.7 485.7,543.9 491.9,543.9 492.3,519.7 517.3,519.7 518.8,496.7 520.3,482.9 525.9,482.9 526.3,478.7 527.8,473.7 529.0,478.7 547.3,478.7 549.0,450.4 550.9,450.4 552.8,476.1 554.7,476.1 556.5,447.9 565.9,447.9 566.8,474.2 568.3,479.2 571.5,479.2 572.8,447.9 574.7,443.7 576.3,443.7 577.8,408.7 588.3,408.7 590.3,440.4 593.0,440.4 595.0,409.2 604.0,409.2 607.3,437.9 608.3,411.7 610.9,406.1 611.8,401.7 612.5,372.3 615.7,372.3 616.3,367.9 618.2,367.9 619.3,335.4 621.3,335.4 621.9,331.1 624.3,331.1 625.0,326.1 626.7,326.1 628.2,299.2 630.3,299.2 630.9,294.7 641.9,294.7 642.6,290.5 643.8,290.5 644.3,281.7 645.7,261.7 649.7,261.7 650.3,257.4 659.7,257.4 660.9,282.4 662.8,286.2 663.8,260.6 666.8,260.6 667.5,256.7 682.2,256.7 682.8,236.2 683.8,254.9 685.9,254.9 686.5,244.9 687.8,223.7 689.3,230.7 690.3,221.2 693.3,221.2 695.0,253.1 697.2,253.1 698.8,221.7 705.9,221.7 706.8,217.2 726.8,217.2 727.5,188.4 729.0,217.2 742.8,217.2 743.3,188.7 744.9,183.1 746.5,196.2 748.0,185.6 750.9,185.6 752.5,217.4 765.9,217.4 767.2,189.3 768.0,213.7 769.0,185.6 770.9,185.6 772.2,213.7 774.7,213.7 775.9,218.1 777.2,218.1 778.3,249.9 779.7,254.9 789.7,254.9 790.5,259.3 792.8,259.3 794.3,287.4 796.5,287.4 797.5,291.7 813.3,291.7 815.3,296.7 815.9,296.7 817.3,327.3 836.5,327.3 837.5,331.7 847.8,331.7 849.7,362.9 851.5,362.9 852.5,367.7 874.0,367.7 875.0,372.3 879.3,372.3 880.9,395.4 881.5,381.7 882.8,400.4 883.4,389.2 885.0,402.3 890.3,402.3 891.3,406.7 900.3,406.7 902.8,442.5 912.2,442.5 913.8,476.1 918.4,476.1 919.3,480.2 932.2,480.2 933.4,484.8 935.0,484.8 938.0,509.8 939.0,514.2 944.7,514.2 945.5,509.2 947.2,514.2 948.4,517.9 981.8,517.9 983.4,522.9 985.3,524.2 987.2,550.4 988.8,548.7 990.3,546.7 992.5,527.3 995.0,549.2 997.2,549.2 998.0,553.6 1025.3,553.6 1026.2,558.2 1037.5,558.2 1037.9,561.7 1038.4,567.9 1038.9,561.7 1039.5,565.7 1040.3,562.9 1040.9,573.7 1041.5,566.7 1042.0,579.7 1042.5,582.9 1043.0,569.7 1043.4,564.2 1043.9,577.7 1044.4,569.7 1044.9,583.7 1045.3,587.9 1051.8,587.9 1052.5,592.6 1097.2,592.6 1098.4,597.3 1100.9,597.3 1101.8,602.3 1103.0,597.5 1110.3,597.5 1112.2,604.2 1113.4,622.9 1114.7,626.1 1120.1,626.1 1120.9,621.7 1121.7,626.1 1134.0,626.1 1134.9,630.5 1190.9,630.5 1191.8,634.8 1193.8,634.8 1194.3,646.7 1194.8,656.7 1195.3,661.7 1195.8,649.7 1196.3,653.7 1197.2,639.2 1197.7,646.7 1198.2,637.7 1199.0,635.4 1199.6,641.7 1200.3,636.7 1200.9,637.9 1201.5,643.7 1202.1,636.7 1202.7,642.7 1203.4,636.1 1204.0,646.7 1204.6,638.7 1205.2,653.7 1205.7,643.7 1206.3,660.4 1206.9,646.7 1207.5,651.7 1208.4,639.2 1209.0,643.7 1209.6,636.7 1210.3,635.4 1217.2,635.4 1218.4,661.7 1220.9,665.7 1227.2,665.7 1227.8,660.4 1228.8,649.2 1230.5,634.8 1245.0,634.8 1246.5,665.7 1292.8,665.7 1293.4,669.8 1512.2,669.8 1514.7,659.2 1517.2,662.9 1519.0,662.9 1520.3,667.9 1527.8,667.9 1529.3,642.9 1532.2,635.7 1535.9,635.7 1536.8,638.7 1537.8,641.7 1538.5,636.7 1539.1,642.7 1539.7,636.7 1540.3,644.7 1540.9,638.7 1541.5,649.7 1542.2,655.4 1542.8,643.7 1543.3,646.7 1544.0,636.7 1551.5,636.7 1552.2,632.7 1570.9,632.7 1571.8,623.7 1572.8,619.2 1573.3,625.7 1573.9,613.7 1574.7,611.7 1575.2,621.7 1575.7,605.7 1576.2,601.7 1576.7,619.7 1577.3,607.7 1577.9,622.7 1578.5,609.7 1579.0,622.9 1579.6,607.7 1580.3,613.7 1580.9,599.7 1581.5,598.6 1582.1,605.7 1582.7,598.7 1583.3,601.7 1584.1,596.7 1585.3,595.4 1586.3,597.7 1587.3,596.2 1588.3,599.7 1589.0,600.4 1589.7,609.7 1590.3,619.7 1590.9,625.4 1592.1,622.7 1593.4,621.7 1594.0,625.4" fill="none" stroke="rgba(0,0,0,0.1)" stroke-width="1.50" stroke-linejoin="round"/>
<polyline points="-195.8,551.1 -193.8,555.1 -187.8,584.3 -181.8,587.8 -180.2,562.1 -178.8,570.2 -176.1,590.3 -163.8,591.3 -20.1,591.3 -18.8,597.8 -16.5,617.0 -14.6,598.8 -12.1,624.5 -9.8,627.5 67.2,628.5 68.0,630.0 198.0,630.0 199.0,628.0 202.0,596.5 220.0,596.5 222.0,625.0 235.0,625.0 235.5,629.0 269.0,629.0 269.5,625.0 300.0,625.0 301.0,625.0 301.6,612.0 302.3,600.0 303.0,597.5 303.4,612.0 303.9,601.0 304.4,616.0 304.9,603.0 305.4,618.7 305.9,604.0 306.4,616.0 306.9,603.0 307.4,613.0 307.9,601.0 308.4,610.0 309.5,596.0 339.7,596.0 340.5,602.0 341.0,603.0 341.5,598.0 342.0,600.0 342.6,608.0 343.2,611.0 343.8,602.0 344.5,601.0 345.0,607.0 345.5,606.0 346.0,600.0 346.5,599.0 347.2,605.0 348.0,606.0 348.5,600.0 349.0,597.5 353.0,597.5 353.5,603.0 354.0,598.7 356.0,598.7 356.6,594.4 374.0,594.4 374.7,590.0 418.5,590.0 419.5,570.0 420.4,558.7 450.4,558.7 451.0,554.0 479.0,554.0 480.0,549.0 483.0,549.0 484.0,538.0 485.4,542.2 491.6,542.2 492.0,518.0 517.0,518.0 518.5,495.0 520.0,481.2 525.6,481.2 526.0,477.0 527.5,472.0 528.7,477.0 547.0,477.0 548.7,448.7 550.6,448.7 552.5,474.4 554.4,474.4 556.2,446.2 565.6,446.2 566.5,472.5 568.0,477.5 571.2,477.5 572.5,446.2 574.4,442.0 576.0,442.0 577.5,407.0 588.0,407.0 590.0,438.7 592.7,438.7 594.7,407.5 603.7,407.5 607.0,436.2 608.0,410.0 610.6,404.4 611.5,400.0 612.2,370.6 615.4,370.6 616.0,366.2 617.9,366.2 619.0,333.7 621.0,333.7 621.6,329.4 624.0,329.4 624.7,324.4 626.4,324.4 627.9,297.5 630.0,297.5 630.6,293.0 641.6,293.0 642.3,288.8 643.5,288.8 644.0,280.0 645.4,260.0 649.4,260.0 650.0,255.7 659.4,255.7 660.6,280.7 662.5,284.5 663.5,258.9 666.5,258.9 667.2,255.0 681.9,255.0 682.5,234.5 683.5,253.2 685.6,253.2 686.2,243.2 687.5,222.0 689.0,229.0 690.0,219.5 693.0,219.5 694.7,251.4 696.9,251.4 698.5,220.0 705.6,220.0 706.5,215.5 726.5,215.5 727.2,186.7 728.7,215.5 742.5,215.5 743.0,187.0 744.6,181.4 746.2,194.5 747.7,183.9 750.6,183.9 752.2,215.7 765.6,215.7 766.9,187.6 767.7,212.0 768.7,183.9 770.6,183.9 771.9,212.0 774.4,212.0 775.6,216.4 776.9,216.4 778.0,248.2 779.4,253.2 789.4,253.2 790.2,257.6 792.5,257.6 794.0,285.7 796.2,285.7 797.2,290.0 813.0,290.0 815.0,295.0 815.6,295.0 817.0,325.6 836.2,325.6 837.2,330.0 847.5,330.0 849.4,361.2 851.2,361.2 852.2,366.0 873.7,366.0 874.7,370.6 879.0,370.6 880.6,393.7 881.2,380.0 882.5,398.7 883.1,387.5 884.7,400.6 890.0,400.6 891.0,405.0 900.0,405.0 902.5,440.8 911.9,440.8 913.5,474.4 918.1,474.4 919.0,478.5 931.9,478.5 933.1,483.1 934.7,483.1 937.7,508.1 938.7,512.5 944.4,512.5 945.2,507.5 946.9,512.5 948.1,516.2 981.5,516.2 983.1,521.2 985.0,522.5 986.9,548.7 988.5,547.0 990.0,545.0 992.2,525.6 994.7,547.5 996.9,547.5 997.7,551.9 1025.0,551.9 1025.9,556.5 1037.2,556.5 1037.6,560.0 1038.1,566.2 1038.6,560.0 1039.2,564.0 1040.0,561.2 1040.6,572.0 1041.2,565.0 1041.7,578.0 1042.2,581.2 1042.7,568.0 1043.1,562.5 1043.6,576.0 1044.1,568.0 1044.6,582.0 1045.0,586.2 1051.5,586.2 1052.2,590.9 1096.9,590.9 1098.1,595.6 1100.6,595.6 1101.5,600.6 1102.7,595.8 1110.0,595.8 1111.9,602.5 1113.1,621.2 1114.4,624.4 1119.8,624.4 1120.6,620.0 1121.4,624.4 1133.7,624.4 1134.6,628.8 1190.6,628.8 1191.5,633.1 1193.5,633.1 1194.0,645.0 1194.5,655.0 1195.0,660.0 1195.5,648.0 1196.0,652.0 1196.9,637.5 1197.4,645.0 1197.9,636.0 1198.7,633.7 1199.3,640.0 1200.0,635.0 1200.6,636.2 1201.2,642.0 1201.8,635.0 1202.4,641.0 1203.1,634.4 1203.7,645.0 1204.3,637.0 1204.9,652.0 1205.4,642.0 1206.0,658.7 1206.6,645.0 1207.2,650.0 1208.1,637.5 1208.7,642.0 1209.3,635.0 1210.0,633.7 1216.9,633.7 1218.1,660.0 1220.6,664.0 1226.9,664.0 1227.5,658.7 1228.5,647.5 1230.2,633.1 1244.7,633.1 1246.2,664.0 1292.5,664.0 1293.1,668.1 1511.9,668.1 1514.4,657.5 1516.9,661.2 1518.7,661.2 1520.0,666.2 1527.5,666.2 1529.0,641.2 1531.9,634.0 1535.6,634.0 1536.5,637.0 1537.5,640.0 1538.2,635.0 1538.8,641.0 1539.4,635.0 1540.0,643.0 1540.6,637.0 1541.2,648.0 1541.9,653.7 1542.5,642.0 1543.0,645.0 1543.7,635.0 1551.2,635.0 1551.9,631.0 1570.6,631.0 1571.5,622.0 1572.5,617.5 1573.0,624.0 1573.6,612.0 1574.4,610.0 1574.9,620.0 1575.4,604.0 1575.9,600.0 1576.4,618.0 1577.0,606.0 1577.6,621.0 1578.2,608.0 1578.7,621.2 1579.3,606.0 1580.0,612.0 1580.6,598.0 1581.2,596.9 1581.8,604.0 1582.4,597.0 1583.0,600.0 1583.8,595.0 1585.0,593.7 1586.0,596.0 1587.0,594.5 1588.0,598.0 1588.7,598.7 1589.4,608.0 1590.0,618.0 1590.6,623.7 1591.8,621.0 1593.1,620.0 1593.7,623.7" fill="none" stroke="#afd8f8" stroke-width="2.00" stroke-linejoin="round"/>
</g>
<rect x="67" y="136" width="1791" height="659" fill="none" stroke="#454545" stroke-width="2" shape-rendering="crispEdges"/>
<g shape-rendering="crispEdges" stroke="rgba(0,0,0,0.165)" stroke-width="1">
<line x1="175.5" y1="822" x2="175.5" y2="985"/>
<line x1="283.5" y1="822" x2="283.5" y2="985"/>
<line x1="391.5" y1="822" x2="391.5" y2="985"/>
<line x1="499.5" y1="822" x2="499.5" y2="985"/>
<line x1="607.5" y1="822" x2="607.5" y2="985"/>
<line x1="715.5" y1="822" x2="715.5" y2="985"/>
<line x1="822.5" y1="822" x2="822.5" y2="985"/>
<line x1="930.5" y1="822" x2="930.5" y2="985"/>
<line x1="1038.5" y1="822" x2="1038.5" y2="985"/>
<line x1="1146.5" y1="822" x2="1146.5" y2="985"/>
<line x1="1254.5" y1="822" x2="1254.5" y2="985"/>
<line x1="1362.5" y1="822" x2="1362.5" y2="985"/>
<line x1="1469.5" y1="822" x2="1469.5" y2="985"/>
<line x1="1577.5" y1="822" x2="1577.5" y2="985"/>
<line x1="1685.5" y1="822" x2="1685.5" y2="985"/>
<line x1="1793.5" y1="822" x2="1793.5" y2="985"/>
<line x1="68" y1="944.5" x2="1857" y2="944.5"/>
<line x1="68" y1="903.5" x2="1857" y2="903.5"/>
<line x1="68" y1="862.5" x2="1857" y2="862.5"/>
</g>
<clipPath id="co"><rect x="68" y="822" width="1789" height="163"/></clipPath>
<g clip-path="url(#co)">
<polyline points="68.4,935.3 70.4,936.5 75.0,943.0 77.2,937.2 81.5,937.2 82.3,943.0 156.4,943.1 157.4,950.3 158.9,944.0 163.4,944.0 164.4,943.1 231.0,943.1 232.4,950.3 247.0,950.3 249.9,951.7 288.5,951.9 290.0,955.4 291.4,952.1 297.4,952.1 300.2,956.9 313.4,956.9 314.2,958.3 331.4,958.3 332.3,958.7 332.7,957.7 333.6,958.1 334.5,954.8 335.4,957.2 336.3,953.0 337.2,957.0 338.1,953.0 339.0,956.9 339.3,952.5 340.2,952.4 343.6,952.5 343.8,951.8 351.7,951.8 353.6,957.8 362.2,957.8 362.6,957.1 365.4,957.1 365.7,954.7 366.5,957.4 367.4,953.6 368.2,957.4 369.1,953.6 369.9,957.4 370.8,953.6 371.2,956.3 372.1,957.6 373.0,956.3 373.9,957.6 374.2,957.2 375.9,957.2 376.1,958.1 382.5,958.1 382.8,956.1 383.7,958.1 384.6,956.3 385.5,958.1 386.4,956.8 386.7,957.9 388.6,957.9 389.0,954.5 389.8,957.1 390.7,953.8 391.5,957.1 392.4,953.2 393.2,957.1 394.1,955.0 394.8,957.1 395.8,954.8 396.7,957.5 397.7,954.8 398.6,957.5 399.6,954.8 400.5,957.5 401.5,954.8 402.2,956.8 405.4,958.3 407.7,956.3 409.2,957.9 419.2,957.9 420.2,957.1 421.2,957.9 423.6,951.8 431.2,951.8 431.7,952.8 433.6,952.8 434.2,952.0 459.2,952.0 459.7,951.1 473.6,951.1 474.2,950.2 475.2,950.2 475.5,949.2 476.1,949.9 476.7,949.2 477.3,949.9 477.9,948.1 478.5,949.9 479.1,946.0 479.7,949.9 480.3,945.3 480.9,949.9 481.5,946.1 482.1,949.9 482.7,948.2 483.3,949.9 483.9,949.2 484.7,949.9 487.9,950.1 488.6,950.9 498.6,950.9 499.2,951.0 534.1,951.0 534.6,950.9 549.1,950.9 549.6,951.8 633.1,951.8 633.8,950.9 635.7,950.9 637.3,947.1 638.8,950.5 640.7,948.0 642.6,949.8 645.5,949.8 647.1,944.4 690.1,944.4 690.8,943.6 694.1,943.6 696.5,937.4 697.1,936.7 705.1,936.7 707.1,929.2 726.1,929.2 727.1,926.5 728.5,922.4 730.1,922.4 731.1,924.4 732.1,922.4 733.1,921.7 746.1,921.7 747.8,914.6 763.5,914.6 764.1,913.0 765.1,908.4 766.1,913.0 768.5,913.0 769.7,907.2 772.1,907.2 773.5,913.0 775.1,913.0 776.1,914.0 778.8,914.0 781.6,907.4 784.7,907.4 785.1,906.6 942.6,906.6 943.1,905.8 945.7,905.8 946.6,904.0 947.6,905.8 969.5,905.8 970.1,904.8 971.1,905.4 972.1,905.6 972.7,904.0 973.1,903.2 973.7,905.0 974.5,905.1 975.1,903.6 975.7,904.8 976.3,904.0 976.7,901.7 977.2,904.6 977.7,901.1 978.1,900.9 978.6,904.4 979.1,901.7 979.5,904.8 980.0,901.3 980.4,903.6 980.7,901.2 981.3,902.5 981.9,900.5 982.6,900.3 986.3,900.3 987.1,899.6 1040.7,899.6 1042.6,900.7 1043.5,902.5 1044.5,904.1 1045.1,903.6 1045.7,905.1 1046.3,904.0 1047.1,904.2 1047.7,905.0 1048.3,904.1 1048.8,904.2 1049.5,905.0 1050.1,905.0 1050.7,904.4 1051.3,905.0 1052.1,905.8 1052.7,904.8 1053.3,905.4 1053.8,905.0 1054.5,905.8 1094.4,905.8 1095.2,906.6 1115.9,906.6 1117.0,907.5 1118.4,907.5 1120.9,912.1 1122.7,912.3 1123.4,913.1 1151.5,913.1 1152.1,914.0 1159.2,914.0 1161.5,920.3 1163.7,920.3 1164.2,921.1 1177.7,921.1 1179.0,922.3 1180.2,928.1 1191.7,928.1 1192.5,928.9 1204.0,928.9 1205.5,935.2 1215.9,935.2 1216.7,936.2 1250.0,936.2 1250.6,938.6 1251.2,940.2 1251.8,937.8 1252.4,939.4 1253.0,937.4 1253.5,938.6 1254.0,937.1 1254.5,939.4 1255.0,937.8 1255.5,940.4 1255.9,940.7 1256.4,938.6 1256.9,941.0 1257.4,939.0 1257.9,941.4 1258.4,939.8 1259.0,941.8 1259.6,942.2 1260.2,940.2 1260.8,942.2 1261.7,940.4 1262.3,942.4 1263.0,941.0 1264.0,942.8 1272.1,942.8 1272.7,943.6 1309.0,943.6 1310.0,947.3 1310.9,944.6 1313.0,944.9 1314.2,947.6 1315.9,944.8 1317.5,944.9 1320.2,950.7 1377.1,950.7 1377.7,951.6 1387.1,951.6 1388.4,952.3 1389.0,955.3 1389.6,957.1 1390.2,954.3 1390.7,956.3 1391.2,952.5 1392.0,952.5 1393.4,952.5 1393.9,954.9 1394.4,956.6 1394.9,954.5 1395.5,955.3 1396.0,956.9 1396.5,957.9 1397.0,955.7 1397.6,957.3 1398.2,954.9 1398.7,953.5 1399.3,956.3 1400.2,957.8 1406.5,957.8 1407.3,956.8 1408.0,957.8 1420.9,957.8 1421.5,958.6 1480.0,958.6 1480.6,960.5 1481.0,961.3 1481.5,959.7 1482.1,963.3 1482.6,960.9 1483.1,962.9 1483.7,960.5 1484.6,959.7 1488.4,959.7 1488.9,961.7 1489.6,962.8 1490.2,960.9 1490.8,962.1 1491.5,959.5 1495.0,959.5 1495.9,965.1 1504.0,965.1 1505.0,964.3 1506.5,963.3 1507.5,965.1 1518.4,965.1 1519.0,966.0 1734.1,966.0 1735.1,964.8 1736.4,961.0 1738.3,959.8 1746.4,959.8 1747.0,959.0 1775.1,959.0 1776.4,957.3 1778.3,951.7 1785.1,951.7 1786.1,950.9 1787.0,944.9 1787.9,944.2 1797.4,944.2 1799.5,937.2 1801.5,937.2 1802.5,936.6 1803.7,936.6 1804.5,929.5 1808.1,929.5 1810.1,922.2 1812.6,922.2 1813.2,921.2 1826.7,921.2 1828.3,916.5 1829.8,921.1 1846.9,921.1 1848.5,914.9 1850.6,914.0 1855.0,914.0 1856.4,907.0" fill="none" stroke="rgba(0,0,0,0.1)" stroke-width="3.00" stroke-linejoin="round"/>
<polyline points="68.3,934.5 70.3,935.7 74.9,942.2 77.1,936.4 81.4,936.4 82.2,942.2 156.3,942.3 157.3,949.5 158.8,943.2 163.3,943.2 164.3,942.3 230.9,942.3 232.3,949.5 246.9,949.5 249.8,951.0 288.4,951.1 289.9,954.6 291.3,951.3 297.3,951.3 300.1,956.1 313.3,956.1 314.1,957.5 331.3,957.5 332.2,958.0 332.6,956.9 333.5,957.3 334.4,954.1 335.3,956.5 336.2,952.3 337.1,956.2 338.0,952.3 338.9,956.1 339.2,951.8 340.1,951.7 343.5,951.8 343.7,951.0 351.6,951.0 353.5,957.1 362.0,957.1 362.4,956.3 365.2,956.3 365.5,954.0 366.4,956.7 367.2,952.9 368.1,956.7 368.9,952.9 369.8,956.7 370.6,952.9 371.0,955.5 371.9,956.8 372.8,955.5 373.7,956.8 374.0,956.5 375.7,956.5 375.9,957.3 382.3,957.3 382.6,955.3 383.5,957.3 384.4,955.5 385.3,957.3 386.2,956.1 386.5,957.2 388.4,957.2 388.8,953.7 389.7,956.3 390.5,953.1 391.4,956.3 392.2,952.4 393.1,956.3 393.9,954.3 394.6,956.3 395.6,954.1 396.6,956.8 397.5,954.1 398.5,956.8 399.4,954.1 400.4,956.8 401.3,954.1 402.0,956.1 405.2,957.6 407.5,955.6 409.0,957.2 419.0,957.2 420.0,956.3 421.0,957.2 423.4,951.0 431.0,951.0 431.5,952.1 433.4,952.1 434.0,951.2 459.0,951.2 459.5,950.4 473.4,950.4 474.0,949.5 475.0,949.5 475.3,948.5 475.9,949.1 476.5,948.5 477.1,949.1 477.7,947.3 478.3,949.1 478.9,945.2 479.5,949.1 480.1,944.6 480.7,949.1 481.3,945.3 481.9,949.1 482.5,947.4 483.1,949.1 483.7,948.5 484.5,949.1 487.7,949.4 488.4,950.1 498.4,950.1 499.0,950.2 534.0,950.2 534.5,950.1 549.0,950.1 549.5,951.0 633.0,951.0 633.7,950.1 635.6,950.1 637.2,946.4 638.7,949.7 640.6,947.2 642.5,949.0 645.4,949.0 647.0,943.7 690.0,943.7 690.7,942.9 694.0,942.9 696.4,936.7 697.0,935.9 705.0,935.9 707.0,928.5 726.0,928.5 727.0,925.8 728.4,921.7 730.0,921.7 731.0,923.7 732.0,921.7 733.0,921.0 746.0,921.0 747.7,913.8 763.4,913.8 764.0,912.3 765.0,907.6 766.0,912.3 768.4,912.3 769.6,906.5 772.0,906.5 773.4,912.3 775.0,912.3 776.0,913.2 778.7,913.2 781.5,906.6 784.6,906.6 785.0,905.8 942.4,905.8 942.9,905.0 945.5,905.0 946.4,903.3 947.4,905.0 969.3,905.0 969.9,904.0 970.9,904.7 971.9,904.9 972.5,903.3 972.9,902.5 973.5,904.3 974.3,904.4 974.9,902.9 975.5,904.1 976.1,903.3 976.5,900.9 977.0,903.9 977.5,900.3 977.9,900.2 978.4,903.7 978.9,900.9 979.3,904.1 979.8,900.5 980.2,902.9 980.5,900.4 981.1,901.7 981.7,899.7 982.4,899.5 986.1,899.5 986.9,898.8 1040.5,898.8 1042.4,899.9 1043.3,901.7 1044.3,903.4 1044.9,902.9 1045.5,904.4 1046.1,903.3 1046.9,903.5 1047.5,904.3 1048.1,903.4 1048.6,903.5 1049.3,904.3 1049.9,904.3 1050.5,903.7 1051.1,904.3 1051.9,905.0 1052.5,904.1 1053.1,904.7 1053.6,904.3 1054.3,905.0 1094.3,905.0 1095.1,905.9 1115.8,905.9 1116.9,906.8 1118.3,906.8 1120.8,911.4 1122.6,911.6 1123.3,912.4 1151.4,912.4 1152.0,913.2 1159.1,913.2 1161.4,919.5 1163.6,919.5 1164.1,920.3 1177.6,920.3 1178.9,921.6 1180.1,927.4 1191.6,927.4 1192.4,928.2 1203.9,928.2 1205.4,934.5 1215.8,934.5 1216.6,935.4 1249.9,935.4 1250.5,937.9 1251.1,939.4 1251.7,937.1 1252.3,938.7 1252.9,936.7 1253.4,937.9 1253.9,936.3 1254.4,938.7 1254.9,937.1 1255.4,939.7 1255.8,939.9 1256.3,937.9 1256.8,940.3 1257.3,938.3 1257.8,940.7 1258.3,939.1 1258.9,941.1 1259.5,941.4 1260.1,939.5 1260.7,941.5 1261.6,939.7 1262.2,941.7 1262.9,940.3 1263.9,942.0 1272.0,942.0 1272.6,942.9 1308.9,942.9 1309.9,946.5 1310.8,943.9 1312.9,944.2 1314.1,946.9 1315.8,944.0 1317.4,944.2 1320.1,950.0 1377.0,950.0 1377.6,950.9 1387.0,950.9 1388.3,951.6 1388.9,954.6 1389.5,956.3 1390.1,953.6 1390.6,955.6 1391.1,951.7 1391.9,951.8 1393.3,951.7 1393.8,954.2 1394.3,955.8 1394.8,953.8 1395.4,954.6 1395.9,956.2 1396.4,957.2 1396.9,955.0 1397.5,956.6 1398.1,954.2 1398.6,952.7 1399.2,955.6 1400.1,957.0 1406.4,957.0 1407.2,956.1 1407.9,957.0 1420.8,957.0 1421.4,957.9 1479.8,957.9 1480.4,959.8 1480.8,960.6 1481.3,959.0 1481.9,962.5 1482.4,960.2 1482.9,962.1 1483.5,959.8 1484.4,958.9 1488.2,958.9 1488.7,961.0 1489.4,962.0 1490.0,960.2 1490.6,961.3 1491.3,958.8 1494.8,958.8 1495.7,964.4 1503.8,964.4 1504.8,963.5 1506.3,962.5 1507.3,964.4 1518.2,964.4 1518.8,965.2 1734.0,965.2 1735.0,964.0 1736.3,960.3 1738.2,959.1 1746.3,959.1 1746.9,958.3 1775.0,958.3 1776.3,956.6 1778.2,951.0 1785.0,951.0 1786.0,950.1 1786.9,944.2 1787.8,943.5 1797.3,943.5 1799.4,936.4 1801.4,936.4 1802.4,935.8 1803.6,935.8 1804.4,928.8 1808.0,928.8 1810.0,921.5 1812.5,921.5 1813.1,920.5 1826.6,920.5 1828.2,915.7 1829.7,920.4 1846.8,920.4 1848.4,914.1 1850.5,913.2 1854.9,913.2 1856.3,906.3" fill="none" stroke="rgba(0,0,0,0.1)" stroke-width="1.50" stroke-linejoin="round"/>
<polyline points="68.0,932.8 70.0,934.0 74.6,940.5 76.8,934.7 81.1,934.7 81.9,940.5 156.0,940.6 157.0,947.8 158.5,941.5 163.0,941.5 164.0,940.6 230.6,940.6 232.0,947.8 246.6,947.8 249.5,949.2 288.1,949.4 289.6,952.9 291.0,949.6 297.0,949.6 299.8,954.4 313.0,954.4 313.8,955.8 331.0,955.8 331.9,956.2 332.3,955.2 333.2,955.6 334.1,952.4 335.0,954.7 335.9,950.6 336.8,954.5 337.6,950.6 338.5,954.4 338.8,950.1 339.7,950.0 343.1,950.1 343.3,949.3 351.2,949.3 353.1,955.4 361.7,955.4 362.1,954.6 364.9,954.6 365.2,952.3 366.1,955.0 366.9,951.2 367.8,955.0 368.6,951.2 369.5,955.0 370.3,951.2 370.7,953.8 371.6,955.1 372.5,953.8 373.4,955.1 373.7,954.7 375.4,954.7 375.6,955.6 382.0,955.6 382.3,953.6 383.2,955.6 384.1,953.8 385.0,955.6 385.9,954.3 386.2,955.5 388.1,955.5 388.5,952.0 389.4,954.6 390.2,951.4 391.1,954.6 391.9,950.7 392.8,954.6 393.6,952.6 394.3,954.6 395.3,952.4 396.3,955.1 397.2,952.4 398.2,955.1 399.1,952.4 400.1,955.1 401.0,952.4 401.7,954.4 404.9,955.8 407.2,953.9 408.7,955.5 418.7,955.5 419.7,954.6 420.7,955.5 423.1,949.3 430.7,949.3 431.2,950.4 433.1,950.4 433.7,949.5 458.7,949.5 459.2,948.6 473.1,948.6 473.7,947.8 474.7,947.8 475.0,946.8 475.6,947.4 476.2,946.8 476.8,947.4 477.4,945.6 478.0,947.4 478.6,943.5 479.2,947.4 479.8,942.8 480.4,947.4 481.0,943.6 481.6,947.4 482.2,945.7 482.8,947.4 483.4,946.8 484.2,947.4 487.4,947.6 488.1,948.4 498.1,948.4 498.7,948.5 533.7,948.5 534.2,948.4 548.7,948.4 549.2,949.3 632.7,949.3 633.4,948.4 635.3,948.4 636.9,944.7 638.4,948.0 640.3,945.5 642.2,947.3 645.1,947.3 646.7,941.9 689.7,941.9 690.4,941.1 693.7,941.1 696.1,935.0 696.7,934.2 704.7,934.2 706.7,926.8 725.7,926.8 726.7,924.0 728.1,919.9 729.7,919.9 730.7,921.9 731.7,919.9 732.7,919.3 745.7,919.3 747.4,912.1 763.1,912.1 763.7,910.5 764.7,905.9 765.7,910.5 768.1,910.5 769.3,904.8 771.7,904.8 773.1,910.5 774.7,910.5 775.7,911.5 778.4,911.5 781.2,904.9 784.3,904.9 784.7,904.1 942.1,904.1 942.6,903.3 945.2,903.3 946.1,901.6 947.1,903.3 969.0,903.3 969.6,902.3 970.6,903.0 971.6,903.2 972.2,901.6 972.6,900.8 973.2,902.6 974.0,902.7 974.6,901.2 975.2,902.4 975.8,901.6 976.2,899.2 976.7,902.2 977.2,898.6 977.6,898.4 978.1,902.0 978.6,899.2 979.0,902.4 979.5,898.8 979.9,901.2 980.2,898.7 980.8,900.0 981.4,898.0 982.1,897.8 985.8,897.8 986.6,897.1 1040.2,897.1 1042.1,898.2 1043.0,900.0 1044.0,901.7 1044.6,901.2 1045.2,902.7 1045.8,901.6 1046.6,901.8 1047.2,902.6 1047.8,901.7 1048.3,901.8 1049.0,902.6 1049.6,902.6 1050.2,902.0 1050.8,902.6 1051.6,903.3 1052.2,902.4 1052.8,903.0 1053.3,902.6 1054.0,903.3 1094.0,903.3 1094.8,904.2 1115.5,904.2 1116.6,905.0 1118.0,905.0 1120.5,909.6 1122.3,909.9 1123.0,910.7 1151.1,910.7 1151.7,911.5 1158.8,911.5 1161.1,917.8 1163.3,917.8 1163.8,918.6 1177.3,918.6 1178.6,919.9 1179.8,925.7 1191.3,925.7 1192.1,926.5 1203.6,926.5 1205.1,932.7 1215.5,932.7 1216.3,933.7 1249.6,933.7 1250.2,936.2 1250.8,937.7 1251.4,935.4 1252.0,937.0 1252.6,935.0 1253.1,936.2 1253.6,934.6 1254.1,937.0 1254.6,935.4 1255.1,938.0 1255.5,938.2 1256.0,936.2 1256.5,938.6 1257.0,936.6 1257.5,939.0 1258.0,937.4 1258.6,939.4 1259.2,939.7 1259.8,937.8 1260.4,939.7 1261.3,938.0 1261.9,939.9 1262.6,938.6 1263.6,940.3 1271.7,940.3 1272.3,941.1 1308.6,941.1 1309.6,944.8 1310.5,942.2 1312.6,942.4 1313.8,945.2 1315.5,942.3 1317.1,942.4 1319.8,948.3 1376.7,948.3 1377.3,949.1 1386.7,949.1 1388.0,949.9 1388.6,952.9 1389.2,954.6 1389.8,951.9 1390.3,953.9 1390.8,950.0 1391.6,950.1 1393.0,950.0 1393.5,952.5 1394.0,954.1 1394.5,952.1 1395.1,952.9 1395.6,954.5 1396.1,955.5 1396.6,953.3 1397.2,954.9 1397.8,952.5 1398.3,951.0 1398.9,953.9 1399.8,955.3 1406.1,955.3 1406.9,954.4 1407.6,955.3 1420.4,955.3 1421.0,956.1 1479.5,956.1 1480.1,958.0 1480.5,958.8 1481.0,957.2 1481.6,960.8 1482.1,958.4 1482.6,960.4 1483.2,958.0 1484.1,957.2 1487.9,957.2 1488.4,959.2 1489.1,960.3 1489.7,958.4 1490.3,959.6 1491.0,957.0 1494.5,957.0 1495.4,962.6 1503.5,962.6 1504.5,961.8 1506.0,960.8 1507.0,962.6 1517.9,962.6 1518.5,963.5 1733.7,963.5 1734.7,962.3 1736.0,958.6 1737.9,957.3 1746.0,957.3 1746.6,956.5 1774.7,956.5 1776.0,954.9 1777.9,949.3 1784.7,949.3 1785.7,948.4 1786.6,942.4 1787.5,941.7 1797.0,941.7 1799.1,934.7 1801.1,934.7 1802.1,934.1 1803.3,934.1 1804.1,927.1 1807.7,927.1 1809.7,919.8 1812.2,919.8 1812.8,918.8 1826.3,918.8 1827.9,914.0 1829.4,918.7 1846.5,918.7 1848.1,912.4 1850.2,911.5 1854.6,911.5 1856.0,904.6" fill="none" stroke="#edc240" stroke-width="2.00" stroke-linejoin="round"/>
<polyline points="68.4,935.7 70.4,936.5 76.4,942.3 82.4,943.0 84.0,937.9 85.4,939.5 88.1,943.5 100.4,943.7 244.1,943.7 245.4,945.0 247.7,948.8 249.6,945.2 252.1,950.3 254.4,950.9 331.4,951.1 332.2,951.4 462.2,951.4 463.2,951.0 466.2,944.7 484.2,944.7 486.2,950.4 499.2,950.4 499.7,951.2 533.1,951.2 533.6,950.4 564.1,950.4 565.1,950.4 565.7,947.8 566.4,945.4 567.1,944.9 567.5,947.8 568.0,945.6 568.5,948.6 569.0,946.0 569.5,949.1 570.0,946.2 570.5,948.6 571.0,946.0 571.5,948.0 572.0,945.6 572.5,947.4 573.6,944.6 603.8,944.6 604.6,945.8 605.1,946.0 605.6,945.0 606.1,945.4 606.7,947.0 607.3,947.6 607.9,945.8 608.6,945.6 609.1,946.8 609.6,946.6 610.1,945.4 610.6,945.2 611.3,946.4 612.1,946.6 612.6,945.4 613.1,944.9 617.1,944.9 617.6,946.0 618.1,945.1 620.1,945.1 620.7,944.3 638.1,944.3 638.8,943.4 682.6,943.4 683.6,939.4 684.5,937.2 714.5,937.2 715.1,936.2 743.1,936.2 744.1,935.3 747.1,935.3 748.1,933.1 749.5,933.9 755.7,933.9 756.1,929.1 781.1,929.1 782.6,924.5 784.1,921.8 789.7,921.8 790.1,920.9 791.6,919.9 792.8,920.9 811.1,920.9 812.8,915.3 814.7,915.3 816.6,920.4 818.5,920.4 820.3,914.8 829.7,914.8 830.6,920.0 832.1,921.0 835.3,921.0 836.6,914.8 838.5,914.0 840.1,914.0 841.6,907.0 852.1,907.0 854.1,913.3 856.8,913.3 858.8,907.1 867.8,907.1 871.1,912.8 872.1,907.6 874.7,906.5 875.6,905.6 876.3,899.8 879.5,899.8 880.1,898.9 882.0,898.9 883.1,892.5 885.1,892.5 885.7,891.6 888.1,891.6 888.8,890.6 890.5,890.6 892.0,885.3 894.1,885.3 894.7,884.4 905.7,884.4 906.4,883.5 907.6,883.5 908.1,881.8 909.5,877.8 913.5,877.8 914.1,877.0 923.5,877.0 924.7,881.9 926.6,882.7 927.6,877.6 930.6,877.6 931.3,876.8 946.0,876.8 946.6,872.7 947.6,876.5 949.7,876.5 950.3,874.5 951.6,870.3 953.1,871.6 954.1,869.8 957.1,869.8 958.8,876.1 961.0,876.1 962.6,869.9 969.7,869.9 970.6,869.0 990.6,869.0 991.3,863.2 992.8,869.0 1006.6,869.0 1007.1,863.3 1008.7,862.2 1010.3,864.8 1011.8,862.7 1014.7,862.7 1016.3,869.0 1029.7,869.0 1031.0,863.4 1031.8,868.3 1032.8,862.7 1034.7,862.7 1036.0,868.3 1038.5,868.3 1039.7,869.1 1041.0,869.1 1042.1,875.5 1043.5,876.5 1053.5,876.5 1054.3,877.3 1056.6,877.3 1058.1,882.9 1060.3,882.9 1061.2,883.8 1077.0,883.8 1079.0,884.8 1079.6,884.8 1081.0,890.8 1100.2,890.8 1101.2,891.7 1111.5,891.7 1113.4,897.9 1115.2,897.9 1116.2,898.9 1137.7,898.9 1138.7,899.8 1143.0,899.8 1144.6,904.4 1145.2,901.7 1146.5,905.4 1147.1,903.2 1148.7,905.8 1154.0,905.8 1155.0,906.6 1164.0,906.6 1166.5,913.7 1175.9,913.7 1177.5,920.4 1182.1,920.4 1183.0,921.2 1195.9,921.2 1197.1,922.2 1198.7,922.2 1201.7,927.1 1202.7,928.0 1208.4,928.0 1209.2,927.0 1210.9,928.0 1212.1,928.7 1245.5,928.7 1247.1,929.7 1249.0,930.0 1250.9,935.2 1252.5,934.9 1254.0,934.5 1256.2,930.6 1258.7,935.0 1260.9,935.0 1261.7,935.8 1289.0,935.8 1289.9,936.7 1301.2,936.7 1301.6,937.4 1302.1,938.7 1302.6,937.4 1303.2,938.2 1304.0,937.7 1304.6,939.8 1305.2,938.4 1305.7,941.0 1306.2,941.7 1306.7,939.0 1307.1,937.9 1307.6,940.6 1308.1,939.0 1308.6,941.8 1309.0,942.6 1315.5,942.6 1316.2,943.6 1360.9,943.6 1362.1,944.5 1364.6,944.5 1365.5,945.5 1366.7,944.6 1374.0,944.6 1375.9,945.9 1377.1,949.6 1378.4,950.2 1383.8,950.2 1384.6,949.4 1385.4,950.2 1397.7,950.2 1398.6,951.1 1454.6,951.1 1455.5,952.0 1457.5,952.0 1458.0,954.3 1458.5,956.3 1459.0,957.3 1459.5,954.9 1460.0,955.7 1460.9,952.8 1461.4,954.3 1461.9,952.5 1462.7,952.1 1463.3,953.3 1464.0,952.3 1464.6,952.6 1465.2,953.7 1465.8,952.3 1466.4,953.5 1467.1,952.2 1467.7,954.3 1468.3,952.7 1468.9,955.7 1469.4,953.7 1470.0,957.1 1470.6,954.3 1471.2,955.3 1472.1,952.8 1472.7,953.7 1473.3,952.3 1474.0,952.1 1480.9,952.1 1482.1,957.3 1484.6,958.1 1490.9,958.1 1491.5,957.1 1492.5,954.8 1494.2,952.0 1508.7,952.0 1510.2,958.1 1556.5,958.1 1557.1,958.9 1775.8,958.9 1778.3,956.8 1780.8,957.6 1782.6,957.6 1783.9,958.6 1791.4,958.6 1792.9,953.6 1795.8,952.1 1799.5,952.1 1800.4,952.7 1801.4,953.3 1802.1,952.3 1802.7,953.5 1803.3,952.3 1803.9,953.9 1804.5,952.7 1805.1,954.9 1805.8,956.1 1806.4,953.7 1806.9,954.3 1807.6,952.3 1815.1,952.3 1815.8,951.6 1834.5,951.6 1835.4,949.8 1836.4,948.9 1836.9,950.2 1837.5,947.8 1838.3,947.4 1838.8,949.4 1839.3,946.2 1839.8,945.4 1840.3,949.0 1840.9,946.6 1841.5,949.6 1842.1,947.0 1842.6,949.6 1843.2,946.6 1843.9,947.8 1844.5,945.0 1845.1,944.8 1845.7,946.2 1846.3,944.8 1846.9,945.4 1847.7,944.4 1848.9,944.1 1849.9,944.6 1850.9,944.3 1851.9,945.0 1852.6,945.1 1853.3,947.0 1853.9,949.0 1854.5,950.1 1855.7,949.6 1857.0,949.4 1857.6,950.1" fill="none" stroke="rgba(0,0,0,0.1)" stroke-width="3.00" stroke-linejoin="round"/>
<polyline points="68.3,934.9 70.3,935.7 76.3,941.5 82.3,942.2 83.9,937.1 85.3,938.7 88.0,942.7 100.3,942.9 244.0,942.9 245.3,944.2 247.6,948.0 249.5,944.4 252.0,949.5 254.3,950.1 331.3,950.3 332.1,950.6 462.0,950.6 463.0,950.2 466.0,944.0 484.0,944.0 486.0,949.6 499.0,949.6 499.5,950.4 533.0,950.4 533.5,949.6 564.0,949.6 565.0,949.6 565.6,947.0 566.3,944.7 567.0,944.2 567.4,947.0 567.9,944.9 568.4,947.8 568.9,945.2 569.4,948.4 569.9,945.4 570.4,947.8 570.9,945.2 571.4,947.2 571.9,944.9 572.4,946.6 573.5,943.9 603.7,943.9 604.5,945.0 605.0,945.2 605.5,944.3 606.0,944.7 606.6,946.2 607.2,946.8 607.8,945.0 608.5,944.9 609.0,946.0 609.5,945.8 610.0,944.7 610.5,944.5 611.2,945.6 612.0,945.8 612.5,944.7 613.0,944.2 617.0,944.2 617.5,945.2 618.0,944.4 620.0,944.4 620.6,943.5 638.0,943.5 638.7,942.7 682.5,942.7 683.5,938.7 684.4,936.4 714.4,936.4 715.0,935.5 743.0,935.5 744.0,934.5 747.0,934.5 748.0,932.3 749.4,933.2 755.6,933.2 756.0,928.4 781.0,928.4 782.5,923.8 784.0,921.0 789.6,921.0 790.0,920.2 791.5,919.2 792.7,920.2 811.0,920.2 812.7,914.6 814.6,914.6 816.5,919.7 818.4,919.7 820.2,914.1 829.6,914.1 830.5,919.3 832.0,920.3 835.2,920.3 836.5,914.1 838.4,913.2 840.0,913.2 841.5,906.3 852.0,906.3 854.0,912.6 856.7,912.6 858.7,906.4 867.7,906.4 871.0,912.1 872.0,906.9 874.6,905.8 875.5,904.9 876.2,899.1 879.4,899.1 880.0,898.2 881.9,898.2 883.0,891.7 885.0,891.7 885.6,890.9 888.0,890.9 888.7,889.9 890.4,889.9 891.9,884.5 894.0,884.5 894.6,883.6 905.5,883.6 906.2,882.8 907.4,882.8 907.9,881.0 909.3,877.1 913.3,877.1 913.9,876.2 923.3,876.2 924.5,881.2 926.4,881.9 927.4,876.8 930.4,876.8 931.1,876.1 945.8,876.1 946.4,872.0 947.4,875.7 949.5,875.7 950.1,873.7 951.4,869.5 952.9,870.9 953.9,869.0 956.9,869.0 958.6,875.4 960.8,875.4 962.4,869.1 969.5,869.1 970.4,868.2 990.4,868.2 991.1,862.5 992.6,868.2 1006.4,868.2 1006.9,862.6 1008.5,861.4 1010.1,864.0 1011.6,861.9 1014.5,861.9 1016.1,868.3 1029.5,868.3 1030.8,862.7 1031.6,867.5 1032.6,861.9 1034.5,861.9 1035.8,867.5 1038.3,867.5 1039.5,868.4 1040.8,868.4 1041.9,874.7 1043.3,875.7 1053.3,875.7 1054.1,876.6 1056.4,876.6 1057.9,882.2 1060.1,882.2 1061.1,883.0 1076.9,883.0 1078.9,884.0 1079.5,884.0 1080.9,890.1 1100.1,890.1 1101.1,891.0 1111.4,891.0 1113.3,897.2 1115.1,897.2 1116.1,898.1 1137.6,898.1 1138.6,899.1 1142.9,899.1 1144.5,903.6 1145.1,900.9 1146.4,904.6 1147.0,902.4 1148.6,905.0 1153.9,905.0 1154.9,905.9 1163.9,905.9 1166.4,913.0 1175.8,913.0 1177.4,919.7 1182.0,919.7 1182.9,920.5 1195.8,920.5 1197.0,921.4 1198.6,921.4 1201.6,926.4 1202.6,927.3 1208.3,927.3 1209.1,926.3 1210.8,927.3 1212.0,928.0 1245.4,928.0 1247.0,929.0 1248.9,929.2 1250.8,934.5 1252.4,934.1 1253.9,933.7 1256.1,929.9 1258.6,934.2 1260.8,934.2 1261.6,935.1 1288.9,935.1 1289.8,936.0 1301.1,936.0 1301.5,936.7 1302.0,937.9 1302.5,936.7 1303.1,937.5 1303.9,936.9 1304.5,939.1 1305.1,937.7 1305.6,940.3 1306.1,940.9 1306.6,938.3 1307.0,937.2 1307.5,939.9 1308.0,938.3 1308.5,941.1 1308.9,941.9 1315.4,941.9 1316.1,942.8 1360.8,942.8 1362.0,943.8 1364.5,943.8 1365.4,944.8 1366.6,943.8 1373.9,943.8 1375.8,945.1 1377.0,948.9 1378.3,949.5 1383.7,949.5 1384.5,948.6 1385.3,949.5 1397.6,949.5 1398.5,950.4 1454.4,950.4 1455.3,951.2 1457.3,951.2 1457.8,953.6 1458.3,955.6 1458.8,956.6 1459.3,954.2 1459.8,955.0 1460.7,952.1 1461.2,953.6 1461.7,951.8 1462.5,951.4 1463.1,952.6 1463.8,951.6 1464.4,951.8 1465.0,953.0 1465.6,951.6 1466.2,952.8 1466.9,951.5 1467.5,953.6 1468.1,952.0 1468.7,955.0 1469.2,953.0 1469.8,956.3 1470.4,953.6 1471.0,954.6 1471.9,952.1 1472.5,953.0 1473.1,951.6 1473.8,951.4 1480.7,951.4 1481.9,956.6 1484.4,957.4 1490.7,957.4 1491.3,956.3 1492.3,954.1 1494.0,951.2 1508.5,951.2 1510.0,957.4 1556.3,957.4 1556.9,958.2 1775.7,958.2 1778.2,956.1 1780.7,956.8 1782.5,956.8 1783.8,957.8 1791.3,957.8 1792.8,952.8 1795.7,951.4 1799.4,951.4 1800.3,952.0 1801.3,952.6 1802.0,951.6 1802.6,952.8 1803.2,951.6 1803.8,953.2 1804.4,952.0 1805.0,954.2 1805.7,955.3 1806.3,953.0 1806.8,953.6 1807.5,951.6 1815.0,951.6 1815.7,950.8 1834.4,950.8 1835.3,949.0 1836.3,948.1 1836.8,949.4 1837.4,947.0 1838.2,946.6 1838.7,948.6 1839.2,945.4 1839.7,944.7 1840.2,948.2 1840.8,945.8 1841.4,948.8 1842.0,946.2 1842.5,948.9 1843.1,945.8 1843.8,947.0 1844.4,944.3 1845.0,944.0 1845.6,945.4 1846.2,944.1 1846.8,944.7 1847.6,943.7 1848.8,943.4 1849.8,943.9 1850.8,943.6 1851.8,944.3 1852.5,944.4 1853.2,946.2 1853.8,948.2 1854.4,949.4 1855.6,948.8 1856.9,948.6 1857.5,949.4" fill="none" stroke="rgba(0,0,0,0.1)" stroke-width="1.50" stroke-linejoin="round"/>
<polyline points="68.0,933.2 70.0,934.0 76.0,939.8 82.0,940.5 83.6,935.4 85.0,937.0 87.7,941.0 100.0,941.2 243.7,941.2 245.0,942.5 247.3,946.3 249.2,942.7 251.7,947.8 254.0,948.4 331.0,948.6 331.8,948.9 461.7,948.9 462.7,948.5 465.7,942.2 483.7,942.2 485.7,947.9 498.7,947.9 499.2,948.7 532.7,948.7 533.2,947.9 563.7,947.9 564.7,947.9 565.3,945.3 566.0,942.9 566.7,942.4 567.1,945.3 567.6,943.1 568.1,946.1 568.6,943.5 569.1,946.6 569.6,943.7 570.1,946.1 570.6,943.5 571.1,945.5 571.6,943.1 572.1,944.9 573.2,942.1 603.4,942.1 604.2,943.3 604.7,943.5 605.2,942.5 605.7,942.9 606.3,944.5 606.9,945.1 607.5,943.3 608.2,943.1 608.7,944.3 609.2,944.1 609.7,942.9 610.2,942.7 610.9,943.9 611.7,944.1 612.2,942.9 612.7,942.4 616.7,942.4 617.2,943.5 617.7,942.7 619.7,942.7 620.3,941.8 637.7,941.8 638.4,940.9 682.2,940.9 683.2,937.0 684.1,934.7 714.1,934.7 714.7,933.8 742.7,933.8 743.7,932.8 746.7,932.8 747.7,930.6 749.1,931.4 755.3,931.4 755.7,926.6 780.7,926.6 782.2,922.1 783.7,919.3 789.3,919.3 789.7,918.5 791.2,917.5 792.4,918.5 810.7,918.5 812.4,912.9 814.3,912.9 816.2,918.0 818.1,918.0 819.9,912.4 829.3,912.4 830.2,917.6 831.7,918.6 834.9,918.6 836.2,912.4 838.1,911.5 839.7,911.5 841.2,904.6 851.7,904.6 853.7,910.9 856.4,910.9 858.4,904.7 867.4,904.7 870.7,910.4 871.7,905.2 874.3,904.0 875.2,903.2 875.9,897.3 879.0,897.3 879.6,896.5 881.5,896.5 882.6,890.0 884.6,890.0 885.2,889.1 887.6,889.1 888.3,888.1 890.0,888.1 891.5,882.8 893.6,882.8 894.2,881.9 905.2,881.9 905.9,881.1 907.1,881.1 907.6,879.3 909.0,875.3 913.0,875.3 913.6,874.5 923.0,874.5 924.2,879.5 926.1,880.2 927.1,875.1 930.1,875.1 930.8,874.3 945.5,874.3 946.1,870.3 947.1,874.0 949.2,874.0 949.8,872.0 951.1,867.8 952.6,869.2 953.6,867.3 956.6,867.3 958.3,873.6 960.5,873.6 962.1,867.4 969.2,867.4 970.1,866.5 990.1,866.5 990.8,860.8 992.3,866.5 1006.1,866.5 1006.6,860.8 1008.2,859.7 1009.8,862.3 1011.3,860.2 1014.2,860.2 1015.8,866.5 1029.2,866.5 1030.5,861.0 1031.3,865.8 1032.3,860.2 1034.2,860.2 1035.5,865.8 1038.0,865.8 1039.2,866.7 1040.5,866.7 1041.6,873.0 1043.0,874.0 1053.0,874.0 1053.8,874.9 1056.1,874.9 1057.6,880.5 1059.8,880.5 1060.8,881.3 1076.6,881.3 1078.6,882.3 1079.2,882.3 1080.6,888.4 1099.8,888.4 1100.8,889.3 1111.1,889.3 1113.0,895.5 1114.8,895.5 1115.8,896.4 1137.3,896.4 1138.3,897.3 1142.6,897.3 1144.2,901.9 1144.8,899.2 1146.1,902.9 1146.7,900.7 1148.3,903.3 1153.6,903.3 1154.6,904.2 1163.6,904.2 1166.1,911.3 1175.5,911.3 1177.1,918.0 1181.7,918.0 1182.6,918.8 1195.5,918.8 1196.7,919.7 1198.3,919.7 1201.3,924.7 1202.3,925.5 1208.0,925.5 1208.8,924.5 1210.5,925.5 1211.7,926.3 1245.1,926.3 1246.7,927.3 1248.6,927.5 1250.5,932.7 1252.1,932.4 1253.6,932.0 1255.8,928.1 1258.3,932.5 1260.5,932.5 1261.3,933.4 1288.6,933.4 1289.5,934.3 1300.8,934.3 1301.2,935.0 1301.7,936.2 1302.2,935.0 1302.8,935.8 1303.6,935.2 1304.2,937.4 1304.8,936.0 1305.3,938.6 1305.8,939.2 1306.3,936.6 1306.7,935.5 1307.2,938.2 1307.7,936.6 1308.2,939.4 1308.6,940.2 1315.1,940.2 1315.8,941.1 1360.5,941.1 1361.7,942.1 1364.2,942.1 1365.1,943.0 1366.3,942.1 1373.6,942.1 1375.5,943.4 1376.7,947.1 1378.0,947.8 1383.4,947.8 1384.2,946.9 1385.0,947.8 1397.3,947.8 1398.2,948.7 1454.1,948.7 1455.0,949.5 1457.0,949.5 1457.5,951.9 1458.0,953.9 1458.5,954.9 1459.0,952.5 1459.5,953.3 1460.4,950.4 1460.9,951.9 1461.4,950.1 1462.2,949.6 1462.8,950.9 1463.5,949.9 1464.1,950.1 1464.7,951.3 1465.3,949.9 1465.9,951.1 1466.6,949.8 1467.2,951.9 1467.8,950.3 1468.4,953.3 1468.9,951.3 1469.5,954.6 1470.1,951.9 1470.7,952.9 1471.6,950.4 1472.2,951.3 1472.8,949.9 1473.5,949.6 1480.4,949.6 1481.6,954.9 1484.1,955.7 1490.4,955.7 1491.0,954.6 1492.0,952.4 1493.7,949.5 1508.2,949.5 1509.7,955.7 1556.0,955.7 1556.6,956.5 1775.4,956.5 1777.9,954.4 1780.4,955.1 1782.2,955.1 1783.5,956.1 1791.0,956.1 1792.5,951.1 1795.4,949.7 1799.1,949.7 1800.0,950.3 1801.0,950.9 1801.7,949.9 1802.3,951.1 1802.9,949.9 1803.5,951.5 1804.1,950.3 1804.7,952.5 1805.4,953.6 1806.0,951.3 1806.5,951.9 1807.2,949.9 1814.7,949.9 1815.4,949.1 1834.1,949.1 1835.0,947.3 1836.0,946.4 1836.5,947.7 1837.1,945.3 1837.9,944.9 1838.4,946.9 1838.9,943.7 1839.4,942.9 1839.9,946.5 1840.5,944.1 1841.1,947.1 1841.7,944.5 1842.2,947.1 1842.8,944.1 1843.5,945.3 1844.1,942.5 1844.7,942.3 1845.3,943.7 1845.9,942.3 1846.5,942.9 1847.3,941.9 1848.5,941.7 1849.5,942.1 1850.5,941.8 1851.5,942.5 1852.2,942.7 1852.9,944.5 1853.5,946.5 1854.1,947.6 1855.3,947.1 1856.6,946.9 1857.2,947.6" fill="none" stroke="#afd8f8" stroke-width="2.00" stroke-linejoin="round"/>
<rect x="332" y="822" width="1525" height="163" fill="rgba(232,207,172,0.32)" stroke="rgba(232,207,172,0.8)" stroke-width="1"/>
</g>
<rect x="67" y="821" width="1791" height="165" fill="none" stroke="#454545" stroke-width="2" shape-rendering="crispEdges"/>
</svg>
<div class="tk" style="left:98.0px;top:800px;width:60px;text-align:center">06:00</div>
<div class="tk" style="left:205.9px;top:800px;width:60px;text-align:center">08:00</div>
<div class="tk" style="left:313.8px;top:800px;width:60px;text-align:center">10:00</div>
<div class="tk" style="left:421.7px;top:800px;width:60px;text-align:center">12:00</div>
<div class="tk" style="left:529.6px;top:800px;width:60px;text-align:center">14:00</div>
<div class="tk" style="left:637.4px;top:800px;width:60px;text-align:center">16:00</div>
<div class="tk" style="left:745.3px;top:800px;width:60px;text-align:center">18:00</div>
<div class="tk" style="left:853.2px;top:800px;width:60px;text-align:center">20:00</div>
<div class="tk" style="left:961.1px;top:800px;width:60px;text-align:center">22:00</div>
<div class="tk" style="left:1069.0px;top:800px;width:60px;text-align:center">00:00</div>
<div class="tk" style="left:1176.8px;top:800px;width:60px;text-align:center">02:00</div>
<div class="tk" style="left:1284.7px;top:800px;width:60px;text-align:center">04:00</div>
<div class="tk" style="left:1392.6px;top:800px;width:60px;text-align:center">06:00</div>
<div class="tk" style="left:1500.5px;top:800px;width:60px;text-align:center">08:00</div>
<div class="tk" style="left:1608.4px;top:800px;width:60px;text-align:center">10:00</div>
<div class="tk" style="left:1716.2px;top:800px;width:60px;text-align:center">12:00</div>
<div class="tk" style="left:1824.1px;top:800px;width:60px;text-align:center">14:00</div>
<div class="tk" style="left:21px;top:765.9px;width:42px;text-align:right">16</div>
<div class="tk" style="left:21px;top:683.9px;width:42px;text-align:right">18</div>
<div class="tk" style="left:21px;top:601.9px;width:42px;text-align:right">20</div>
<div class="tk" style="left:21px;top:519.9px;width:42px;text-align:right">22</div>
<div class="tk" style="left:21px;top:437.9px;width:42px;text-align:right">24</div>
<div class="tk" style="left:21px;top:355.9px;width:42px;text-align:right">26</div>
<div class="tk" style="left:21px;top:273.9px;width:42px;text-align:right">28</div>
<div class="tk" style="left:21px;top:191.9px;width:42px;text-align:right">30</div>
<div class="tk" style="left:38.2px;top:991px;width:60px;text-align:center">00:00</div>
<div class="tk" style="left:146.1px;top:991px;width:60px;text-align:center">02:00</div>
<div class="tk" style="left:253.9px;top:991px;width:60px;text-align:center">04:00</div>
<div class="tk" style="left:361.8px;top:991px;width:60px;text-align:center">06:00</div>
<div class="tk" style="left:469.6px;top:991px;width:60px;text-align:center">08:00</div>
<div class="tk" style="left:577.5px;top:991px;width:60px;text-align:center">10:00</div>
<div class="tk" style="left:685.4px;top:991px;width:60px;text-align:center">12:00</div>
<div class="tk" style="left:793.2px;top:991px;width:60px;text-align:center">14:00</div>
<div class="tk" style="left:901.1px;top:991px;width:60px;text-align:center">16:00</div>
<div class="tk" style="left:1008.9px;top:991px;width:60px;text-align:center">18:00</div>
<div class="tk" style="left:1116.8px;top:991px;width:60px;text-align:center">20:00</div>
<div class="tk" style="left:1224.7px;top:991px;width:60px;text-align:center">22:00</div>
<div class="tk" style="left:1332.5px;top:991px;width:60px;text-align:center">00:00</div>
<div class="tk" style="left:1440.4px;top:991px;width:60px;text-align:center">02:00</div>
<div class="tk" style="left:1548.2px;top:991px;width:60px;text-align:center">04:00</div>
<div class="tk" style="left:1656.1px;top:991px;width:60px;text-align:center">06:00</div>
<div class="tk" style="left:1764.0px;top:991px;width:60px;text-align:center">08:00</div>
<div class="tk" style="left:20px;top:979.6px;width:43px;text-align:right">15</div>
<div class="tk" style="left:20px;top:938.9px;width:43px;text-align:right">20</div>
<div class="tk" style="left:20px;top:898.1px;width:43px;text-align:right">25</div>
<div class="tk" style="left:20px;top:857.4px;width:43px;text-align:right">30</div>
<div class="tk" style="left:20px;top:816.6px;width:43px;text-align:right">35</div>

<div id="leg" class="abs"></div>
<div id="legh" class="abs"></div>
<div id="legt" class="abs">Legenda 12:51:24 (2020-07-22)</div>
<div id="legx" class="abs"></div>
<svg class="abs" style="left:1814px;top:157px" width="20" height="20" viewBox="0 0 20 20"><path d="M6.500 6.700L14 14.200M14 6.700L6.500 14.200" stroke="#4c4943" stroke-width="2.700"/></svg>
<div class="lb abs" style="left:1556px;top:193px"><i style="background:#edc240;opacity:.85"></i></div>
<div class="lt abs" style="left:1580px;top:195px">Teplota venkovní - Východní fasáda = 24.9 °C</div>
<div class="lb abs" style="left:1556px;top:213px"><i style="background:#afd8f8"></i></div>
<div class="lt abs" style="left:1580px;top:215px">Teplota venkovní - Západní fasáda = 19.6 °C</div>
</div></body></html>
